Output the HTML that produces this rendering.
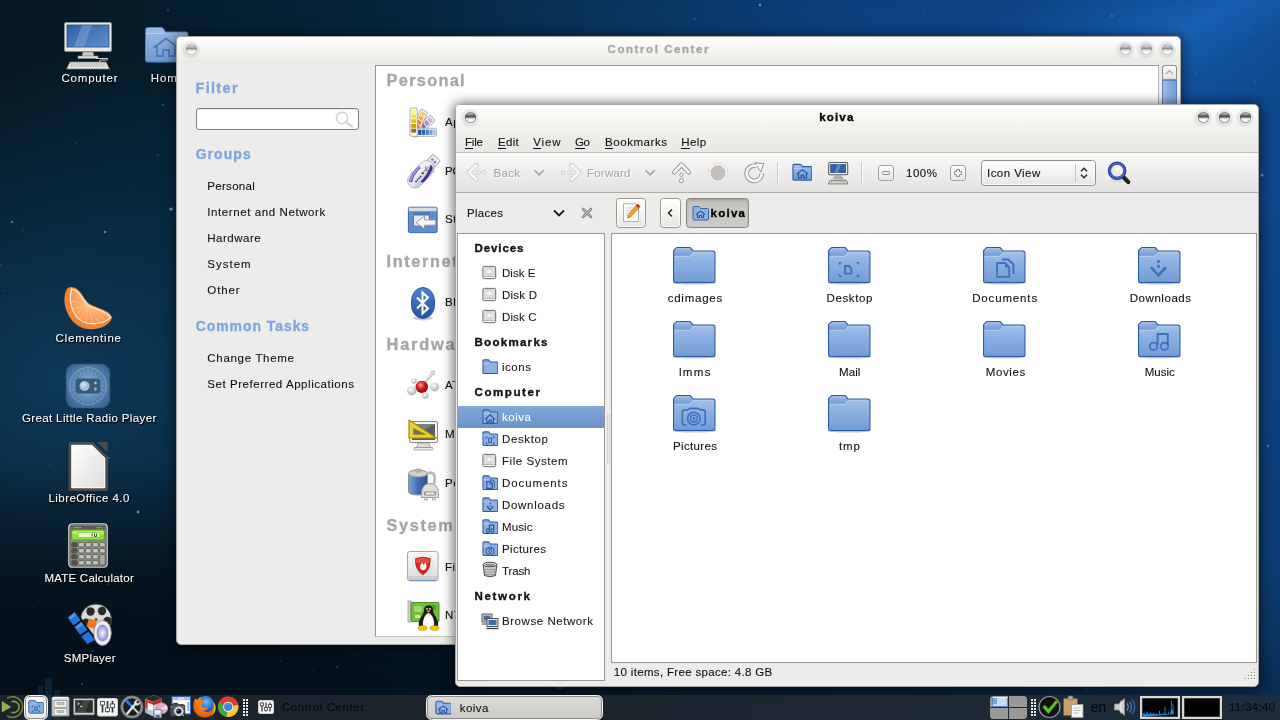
<!DOCTYPE html>
<html><head><meta charset="utf-8"><title>desktop</title>
<style>
html,body{margin:0;padding:0;}
body{width:1280px;height:720px;overflow:hidden;position:relative;font-family:"Liberation Sans",sans-serif;background:#06192b;}
#r{position:absolute;left:0;top:0;width:1280px;height:720px;overflow:hidden;will-change:transform;}
#r div,#r span,#r svg{position:absolute;box-sizing:border-box;}
.t{white-space:nowrap;display:block;}

.win{background:#edeceb;border-radius:5px;border:1px solid #a6a6a3;box-shadow:inset 0 0 0 1px #eaece6;}
.tb{border-radius:4px 4px 0 0;background:linear-gradient(#ffffff 0%,#f7f8f5 40%,#e8ebe5 100%);}
.tb2{border-radius:4px 4px 0 0;background:linear-gradient(#ffffff 0%,#f8f9f6 40%,#eef0eb 100%);}
.ds{text-shadow:1px 1px 1px #000,0 0 2px #000;}

.wr{width:18px;height:18px;border-radius:50%;background:radial-gradient(circle,rgba(214,214,212,0.65) 0%,rgba(218,218,216,0.58) 62%,rgba(225,225,223,0.28) 85%,rgba(230,230,228,0) 100%);}
.wb{width:11px;height:11px;border-radius:50%;left:3.5px;top:3.5px;background:linear-gradient(#ececec 0%,#d6d6d6 14%,#adadad 32%,#8e8e8e 43%,#c4c4c4 52%,#efefef 62%,#fcfcfc 75%,#ffffff 100%);box-shadow:inset 0 0 0 0.8px rgba(120,120,120,0.45);}
.wba{background:linear-gradient(#d2d2d2 0%,#bcbcbc 12%,#747474 30%,#4a4a4a 43%,#8e8e8e 51%,#e2e2e2 60%,#fafafa 72%,#ffffff 100%);box-shadow:inset 0 0 0 0.8px rgba(60,60,60,0.55);}

</style></head><body><div id="r">
<div style="left:0px;top:0px;width:1280px;height:720px;background:radial-gradient(ellipse 380px 230px at 1150px 30px, rgba(20,90,172,0.70), rgba(20,90,172,0) 100%),radial-gradient(ellipse 700px 400px at 1080px 100px, rgba(13,76,150,0.85), rgba(13,76,150,0) 100%),radial-gradient(ellipse 460px 520px at 1290px 380px, rgba(12,64,124,0.85), rgba(12,64,124,0) 100%),radial-gradient(ellipse 420px 330px at 60px 380px, rgba(15,62,98,0.85), rgba(15,62,98,0) 100%),linear-gradient(90deg,#04161f 0%,#052031 20%,#072a48 45%,#0a3762 72%,#0b3b6b 100%);"></div>
<div style="left:0px;top:420px;width:1280px;height:300px;background:radial-gradient(ellipse 1000px 300px at 330px 330px, rgba(4,14,22,0.72), rgba(4,14,22,0.48) 60%, rgba(4,14,26,0) 100%);"></div>
<div style="left:0px;top:420px;width:620px;height:300px;background:radial-gradient(ellipse 560px 250px at 60px 300px, rgba(3,10,16,0.62), rgba(3,10,16,0.35) 55%, rgba(3,10,16,0) 100%);"></div>
<div style="left:0px;top:560px;width:1280px;height:160px;background:linear-gradient(rgba(5,18,34,0),rgba(5,18,34,0.42));"></div>
<div style="left:780px;top:0px;width:500px;height:200px;background:linear-gradient(154deg,rgba(5,36,84,0.40) 0%,rgba(5,36,84,0.30) 26%,rgba(20,90,180,0) 41%,rgba(44,128,224,0.30) 51%,rgba(20,90,180,0) 62%,rgba(5,36,84,0.16) 80%,rgba(5,36,84,0.22) 100%);-webkit-mask-image:radial-gradient(ellipse 100% 100% at 100% 0%,#000 55%,transparent 100%);mask-image:radial-gradient(ellipse 100% 100% at 100% 0%,#000 55%,transparent 100%);"></div>
<svg style="left:0px;top:0px;" width="1280" height="720" viewBox="0 0 1280 720"><circle cx="171" cy="209" r="1.6" fill="#7fb0ee" opacity="0.9"/><circle cx="688" cy="224" r="1.2" fill="#7fb0ee" opacity="0.6"/><circle cx="105" cy="232" r="1.2" fill="#7fb0ee" opacity="0.7"/><circle cx="1262" cy="175" r="1.6" fill="#7fb0ee" opacity="0.8"/><circle cx="760" cy="5" r="1.2" fill="#7fb0ee" opacity="0.8"/><circle cx="270" cy="455" r="1.2" fill="#7fb0ee" opacity="0.6"/><circle cx="138" cy="512" r="1.4" fill="#7fb0ee" opacity="0.8"/><circle cx="12" cy="222" r="1.2" fill="#7fb0ee" opacity="0.6"/><circle cx="560" cy="688" r="1.0" fill="#7fb0ee" opacity="0.5"/><circle cx="1268" cy="446" r="1.2" fill="#7fb0ee" opacity="0.6"/><circle cx="1112" cy="16" r="1" fill="#7fb0ee" opacity="0.5"/><circle cx="74" cy="352" r="0.52" fill="#8fb8e8" opacity="0.26"/><circle cx="89" cy="63" r="0.69" fill="#8fb8e8" opacity="0.39"/><circle cx="158" cy="155" r="0.78" fill="#8fb8e8" opacity="0.43"/><circle cx="1250" cy="32" r="0.89" fill="#8fb8e8" opacity="0.22"/><circle cx="76" cy="143" r="0.81" fill="#8fb8e8" opacity="0.26"/><circle cx="1255" cy="82" r="0.69" fill="#8fb8e8" opacity="0.37"/><circle cx="50" cy="464" r="0.84" fill="#8fb8e8" opacity="0.31"/><circle cx="78" cy="487" r="0.79" fill="#8fb8e8" opacity="0.45"/><circle cx="29" cy="320" r="0.58" fill="#8fb8e8" opacity="0.16"/><circle cx="75" cy="533" r="0.56" fill="#8fb8e8" opacity="0.20"/><circle cx="103" cy="312" r="0.75" fill="#8fb8e8" opacity="0.41"/><circle cx="5" cy="291" r="0.67" fill="#8fb8e8" opacity="0.31"/><circle cx="133" cy="440" r="0.53" fill="#8fb8e8" opacity="0.14"/><circle cx="0" cy="105" r="0.55" fill="#8fb8e8" opacity="0.24"/><circle cx="33" cy="607" r="0.78" fill="#8fb8e8" opacity="0.17"/><circle cx="1087" cy="689" r="0.71" fill="#8fb8e8" opacity="0.28"/><circle cx="110" cy="71" r="0.65" fill="#8fb8e8" opacity="0.21"/><circle cx="30" cy="660" r="0.74" fill="#8fb8e8" opacity="0.17"/><circle cx="695" cy="19" r="0.74" fill="#8fb8e8" opacity="0.44"/><circle cx="455" cy="20" r="0.51" fill="#8fb8e8" opacity="0.21"/><circle cx="109" cy="458" r="0.91" fill="#8fb8e8" opacity="0.38"/><circle cx="163" cy="105" r="0.91" fill="#8fb8e8" opacity="0.39"/><circle cx="168" cy="10" r="0.94" fill="#8fb8e8" opacity="0.33"/><circle cx="168" cy="632" r="0.66" fill="#8fb8e8" opacity="0.27"/><circle cx="670" cy="13" r="0.70" fill="#8fb8e8" opacity="0.18"/><circle cx="5" cy="555" r="0.58" fill="#8fb8e8" opacity="0.28"/><circle cx="136" cy="389" r="0.61" fill="#8fb8e8" opacity="0.21"/><circle cx="156" cy="307" r="0.53" fill="#8fb8e8" opacity="0.20"/><circle cx="94" cy="465" r="0.85" fill="#8fb8e8" opacity="0.42"/><circle cx="281" cy="661" r="0.68" fill="#8fb8e8" opacity="0.28"/><circle cx="1267" cy="578" r="0.57" fill="#8fb8e8" opacity="0.26"/><circle cx="924" cy="14" r="0.75" fill="#8fb8e8" opacity="0.27"/><circle cx="23" cy="230" r="0.78" fill="#8fb8e8" opacity="0.29"/><circle cx="82" cy="684" r="0.85" fill="#8fb8e8" opacity="0.44"/><circle cx="134" cy="184" r="0.52" fill="#8fb8e8" opacity="0.38"/><circle cx="115" cy="40" r="0.81" fill="#8fb8e8" opacity="0.26"/><circle cx="93" cy="651" r="0.79" fill="#8fb8e8" opacity="0.38"/><circle cx="107" cy="594" r="0.53" fill="#8fb8e8" opacity="0.40"/><circle cx="140" cy="112" r="0.52" fill="#8fb8e8" opacity="0.19"/><circle cx="444" cy="13" r="0.61" fill="#8fb8e8" opacity="0.13"/><circle cx="1196" cy="74" r="0.87" fill="#8fb8e8" opacity="0.26"/><circle cx="70" cy="90" r="0.53" fill="#8fb8e8" opacity="0.36"/><circle cx="108" cy="584" r="0.89" fill="#8fb8e8" opacity="0.34"/><circle cx="337" cy="667" r="0.94" fill="#8fb8e8" opacity="0.30"/><circle cx="313" cy="670" r="0.64" fill="#8fb8e8" opacity="0.24"/><circle cx="1" cy="265" r="0.71" fill="#8fb8e8" opacity="0.29"/><circle cx="6" cy="183" r="0.54" fill="#8fb8e8" opacity="0.25"/><circle cx="53" cy="16" r="0.64" fill="#8fb8e8" opacity="0.20"/></svg>
<svg style="left:62px;top:20px;" width="52" height="50" viewBox="0 0 52 50">
<defs><linearGradient id="scr" x1="0" y1="0" x2="1" y2="1"><stop offset="0" stop-color="#2f5fa8"/><stop offset="1" stop-color="#5d8fd0"/></linearGradient></defs>
<rect x="2.5" y="2.500" width="47" height="29" rx="1.500" fill="#e9e9e6" stroke="#8a8c88"/>
<rect x="5" y="5" width="42" height="22" fill="url(#scr)" stroke="#274b80" stroke-width="0.800"/>
<path d="M20 5 L30 5 L22 27 L12 27Z" fill="#fff" opacity="0.18"/>
<path d="M21 32 h10 l1 4 h-12z" fill="#c9cac6" stroke="#8a8c88" stroke-width="0.600"/>
<rect x="16" y="36" width="20" height="2.500" fill="#dfe0dc" stroke="#8a8c88" stroke-width="0.600"/>
<path d="M8 42 h36 l3.500 7 h-43z" fill="#e9eae6" stroke="#77797a" stroke-width="0.800"/>
<path d="M9 44 h34 M8 46 h36" stroke="#8a8c88" stroke-width="1.200" stroke-dasharray="1.500 1"/>
<path d="M34 38.500 h11 q2 0 0 1.500 h-6 q-1.500 0 -1.500 2" stroke="#c9c9c6" fill="none" stroke-width="1"/>
</svg>
<span class="t" style="left:61.50px;top:72.85px;font-size:11.52px;line-height:11.52px;color:#fff;-webkit-text-stroke:0.1px #fff;letter-spacing:0.775px;text-shadow:1px 1px 0 #000,0 1px 2px #000;">Computer</span>
<svg style="left:144px;top:26px;" width="46" height="38" viewBox="0 0 46 38">
<defs><linearGradient id="fh" x1="0" y1="0" x2="0" y2="1"><stop offset="0" stop-color="#9fbde7"/><stop offset="1" stop-color="#6f98cf"/></linearGradient></defs>
<path d="M1.500 4 q0 -2.500 2.500 -2.500 h13 q2 0 3 2 l1.500 2.500 h20.500 q2 0 2 2 v26 q0 2 -2 2 h-38.500 q-2 0 -2 -2z" fill="url(#fh)" stroke="#5583c4"/>
<path d="M2.500 7.500 h15 q1.500 0 2.500 -1.500" fill="none" stroke="#bcd2f0" stroke-width="1"/>
<path d="M9.500 22 l12.500 -9.500 l12.500 9.500 M13 20 v10 h6 v-6 h6 v6 h6 v-10" fill="none" stroke="#4a7cc2" stroke-width="1.800"/>
</svg>
<span class="t" style="left:150.65px;top:72.85px;font-size:11.52px;line-height:11.52px;color:#fff;-webkit-text-stroke:0.1px #fff;letter-spacing:0.924px;text-shadow:1px 1px 0 #000,0 1px 2px #000;">Home</span>
<svg style="left:62px;top:284px;" width="52" height="48" viewBox="0 0 52 48">
<defs><radialGradient id="cl" cx="0.520" cy="0.420" r="0.650"><stop offset="0" stop-color="#fdbb85"/><stop offset="1" stop-color="#f59348"/></radialGradient></defs>
<path d="M9 3 C19 3.500 21 15 27 19.500 C35 24.500 48 26 50 33.500 C48 42 34 47.500 22 44.500 C8 40.500 0 22 3 10 C4 5.500 6 3 9 3Z" fill="#f08535"/>
<path d="M9.500 5 C18 6 20 16 26.500 21 C34 26 46 27.500 48.500 33.500 C42 40 29 41.500 20.500 37.500 C11 32.500 6 19 9.500 5Z" fill="url(#cl)" stroke="#fee4d0" stroke-width="1.300"/>
<g stroke="#fdd0a8" stroke-width="0.700" opacity="0.750"><path d="M26 21 L10 9"/><path d="M26 21 L8.500 17"/><path d="M26 21 L10 25"/><path d="M26 21 L13 31"/><path d="M26 21 L18 36"/><path d="M26 21 L24 39"/><path d="M26 21 L31 40"/><path d="M26 21 L37 39"/><path d="M26 21 L43 36"/><path d="M26 21 L47 33"/><path d="M26 21 L12 6"/></g>
</svg>
<span class="t" style="left:55.60px;top:332.85px;font-size:11.52px;line-height:11.52px;color:#fff;-webkit-text-stroke:0.1px #fff;letter-spacing:0.793px;text-shadow:1px 1px 0 #000,0 1px 2px #000;">Clementine</span>
<svg style="left:65px;top:363px;" width="46" height="46" viewBox="0 0 46 46">
<defs><radialGradient id="rp" cx="0.500" cy="0.480" r="0.620"><stop offset="0" stop-color="#8db4dc"/><stop offset="0.550" stop-color="#5f8cbc"/><stop offset="1" stop-color="#3b6490"/></radialGradient></defs>
<rect x="1" y="1" width="44" height="44" rx="8.500" fill="url(#rp)" stroke="#2d4e73" stroke-width="0.800" opacity="0.930"/>
<circle cx="23" cy="23" r="18.500" fill="none" stroke="#a9c8e8" stroke-width="0.700" opacity="0.600"/>
<g stroke="#b9d4ef" stroke-width="0.500" opacity="0.450"><path d="M23 23 L41.5 23.0"/><path d="M23 23 L40.9 27.8"/><path d="M23 23 L39.0 32.3"/><path d="M23 23 L36.1 36.1"/><path d="M23 23 L32.2 39.0"/><path d="M23 23 L27.8 40.9"/><path d="M23 23 L23.0 41.5"/><path d="M23 23 L18.2 40.9"/><path d="M23 23 L13.7 39.0"/><path d="M23 23 L9.9 36.1"/><path d="M23 23 L7.0 32.2"/><path d="M23 23 L5.1 27.8"/><path d="M23 23 L4.5 23.0"/><path d="M23 23 L5.1 18.2"/><path d="M23 23 L7.0 13.7"/><path d="M23 23 L9.9 9.9"/><path d="M23 23 L13.8 7.0"/><path d="M23 23 L18.2 5.1"/><path d="M23 23 L23.0 4.5"/><path d="M23 23 L27.8 5.1"/><path d="M23 23 L32.3 7.0"/><path d="M23 23 L36.1 9.9"/><path d="M23 23 L39.0 13.8"/><path d="M23 23 L40.9 18.2"/></g>
<rect x="10.500" y="15.500" width="25" height="15" rx="3.500" fill="#3a5877"/>
<circle cx="19.500" cy="23" r="5" fill="#a9c0d8"/><circle cx="18.500" cy="22" r="2.500" fill="#c4d6e8"/>
<circle cx="30.500" cy="20" r="1.400" fill="#a9c0d8"/><circle cx="30.500" cy="26" r="1.400" fill="#a9c0d8"/>
</svg>
<span class="t" style="left:21.90px;top:412.85px;font-size:11.52px;line-height:11.52px;color:#fff;-webkit-text-stroke:0.1px #fff;letter-spacing:0.371px;text-shadow:1px 1px 0 #000,0 1px 2px #000;">Great Little Radio Player</span>
<svg style="left:67px;top:441px;" width="42" height="50" viewBox="0 0 42 50">
<defs><linearGradient id="lo" x1="0" y1="0" x2="1" y2="1"><stop offset="0" stop-color="#ffffff"/><stop offset="1" stop-color="#dcdcda"/></linearGradient></defs>
<path d="M3 2.500 h22.500 l14 14 v32 h-36.500z" fill="url(#lo)" stroke="#4c4c4c" stroke-width="3" stroke-linejoin="round"/>
<path d="M30 1 h10.500 v10.500z" fill="#4c4c4c"/>
<path d="M4.800 4.300 h20 l13 13 v29.500 h-33z" fill="none" stroke="#fff" stroke-width="1" opacity="0.900"/>
</svg>
<span class="t" style="left:48.45px;top:492.85px;font-size:11.52px;line-height:11.52px;color:#fff;-webkit-text-stroke:0.1px #fff;letter-spacing:0.442px;text-shadow:1px 1px 0 #000,0 1px 2px #000;">LibreOffice 4.0</span>
<svg style="left:68px;top:523px;" width="40" height="45" viewBox="0 0 40 45">
<rect x="0.750" y="0.750" width="38.500" height="43.500" rx="3.500" fill="#8e9089" stroke="#c9cac5" stroke-width="1.200"/>
<rect x="2" y="2" width="36" height="41" rx="2.500" fill="none" stroke="#5a5c55" stroke-width="0.800"/>
<rect x="3" y="3" width="34" height="3.500" fill="#5a5c55"/><path d="M5.500 4.700 h8" stroke="#c9cac5" stroke-width="1" stroke-dasharray="1 0.600"/><path d="M28 4.700 h7" stroke="#c98a3a" stroke-width="1"/>
<rect x="3.600" y="7" width="32.800" height="10" rx="1.500" fill="#8ae234" stroke="#4e9a06" stroke-width="0.800"/><rect x="4.500" y="7.800" width="31" height="3.500" rx="1" fill="#c4f58a" opacity="0.700"/>
<rect x="10" y="9.500" width="22" height="5" fill="#e4f8c8" stroke="#6ab02a" stroke-width="0.500"/><path d="M24 10.500 v3 M26.500 10.500 v3 h2 v-3" stroke="#2a4a0a" stroke-width="0.900" fill="none"/>
<rect x="3.6" y="19.5" width="5.600" height="4.400" rx="1" fill="#4f514b" stroke="#4a4c46" stroke-width="0.700"/><rect x="10.6" y="19.5" width="5.600" height="4.400" rx="1" fill="#c4c5c0" stroke="#4a4c46" stroke-width="0.700"/><rect x="17.6" y="19.5" width="5.600" height="4.400" rx="1" fill="#c4c5c0" stroke="#4a4c46" stroke-width="0.700"/><rect x="24.6" y="19.5" width="5.600" height="4.400" rx="1" fill="#c4c5c0" stroke="#4a4c46" stroke-width="0.700"/><rect x="31.6" y="19.5" width="5.600" height="4.400" rx="1" fill="#c4c5c0" stroke="#4a4c46" stroke-width="0.700"/><rect x="3.6" y="25.5" width="5.600" height="4.400" rx="1" fill="#4f514b" stroke="#4a4c46" stroke-width="0.700"/><rect x="10.6" y="25.5" width="5.600" height="4.400" rx="1" fill="#c4c5c0" stroke="#4a4c46" stroke-width="0.700"/><rect x="17.6" y="25.5" width="5.600" height="4.400" rx="1" fill="#c4c5c0" stroke="#4a4c46" stroke-width="0.700"/><rect x="24.6" y="25.5" width="5.600" height="4.400" rx="1" fill="#c4c5c0" stroke="#4a4c46" stroke-width="0.700"/><rect x="31.6" y="25.5" width="5.600" height="4.400" rx="1" fill="#c4c5c0" stroke="#4a4c46" stroke-width="0.700"/><rect x="3.6" y="31.5" width="5.600" height="4.400" rx="1" fill="#4f514b" stroke="#4a4c46" stroke-width="0.700"/><rect x="10.6" y="31.5" width="5.600" height="4.400" rx="1" fill="#c4c5c0" stroke="#4a4c46" stroke-width="0.700"/><rect x="17.6" y="31.5" width="5.600" height="4.400" rx="1" fill="#c4c5c0" stroke="#4a4c46" stroke-width="0.700"/><rect x="24.6" y="31.5" width="5.600" height="4.400" rx="1" fill="#c4c5c0" stroke="#4a4c46" stroke-width="0.700"/><rect x="31.6" y="31.5" width="5.600" height="10.500" rx="1" fill="#a9aaa5" stroke="#4a4c46" stroke-width="0.700"/><rect x="3.6" y="37.5" width="5.600" height="4.400" rx="1" fill="#4f514b" stroke="#4a4c46" stroke-width="0.700"/><rect x="10.6" y="37.5" width="5.600" height="4.400" rx="1" fill="#c4c5c0" stroke="#4a4c46" stroke-width="0.700"/><rect x="17.6" y="37.5" width="5.600" height="4.400" rx="1" fill="#c4c5c0" stroke="#4a4c46" stroke-width="0.700"/><rect x="24.6" y="37.5" width="5.600" height="4.400" rx="1" fill="#c4c5c0" stroke="#4a4c46" stroke-width="0.700"/>
</svg>
<span class="t" style="left:44.40px;top:572.85px;font-size:11.52px;line-height:11.52px;color:#fff;-webkit-text-stroke:0.1px #fff;letter-spacing:0.228px;text-shadow:1px 1px 0 #000,0 1px 2px #000;">MATE Calculator</span>
<svg style="left:64px;top:602px;" width="50" height="48" viewBox="0 0 50 48">
<defs><radialGradient id="spk" cx="0.500" cy="0.500" r="0.500"><stop offset="0" stop-color="#fff"/><stop offset="0.300" stop-color="#c9c6f4"/><stop offset="0.620" stop-color="#8f8ad8"/><stop offset="0.700" stop-color="#e8e8ee"/><stop offset="1" stop-color="#f4f4f6"/></radialGradient></defs>
<circle cx="32" cy="17.500" r="15.500" fill="#dadad8" stroke="#4a4a4a" stroke-width="1"/>
<circle cx="26.500" cy="9.500" r="4.200" fill="#2a2a2a"/><circle cx="38" cy="9" r="4.200" fill="#2a2a2a"/><circle cx="43.500" cy="19" r="4.200" fill="#2a2a2a"/><circle cx="22" cy="20" r="3.600" fill="#2a2a2a"/><circle cx="32" cy="17.500" r="1.500" fill="#555"/>
<path d="M1.500 15.200 L11.200 7.400 L33.600 38.500 L22.900 44.400Z" fill="#111"/>
<path d="M3.800 15.600 L10.700 10 L16.500 18.200 L9.300 23.400Z M10.500 25 L17.600 19.800 L23.500 28 L16 32.800Z M17.200 34.400 L24.600 29.600 L30.800 38 L23.400 42Z" fill="#1f74e0"/>
<path d="M4.500 15.700 L10.500 10.800 L12 13 L6 17.800Z M11.200 25 L17.400 20.600 L19 22.800 L12.800 27.200Z" fill="#6aa8f4" opacity="0.700"/>
<path d="M25 16.500 l8 2.500 l-2.500 8 l-8 -2.500z" fill="#f57a16"/>
<ellipse cx="38.500" cy="31" rx="8.800" ry="12.500" fill="url(#spk)" stroke="#8a8a8a" stroke-width="0.900"/>
</svg>
<span class="t" style="left:63.75px;top:652.85px;font-size:11.52px;line-height:11.52px;color:#fff;-webkit-text-stroke:0.1px #fff;letter-spacing:0.281px;text-shadow:1px 1px 0 #000,0 1px 2px #000;">SMPlayer</span>
<div style="left:176px;top:36px;width:1005px;height:609px;border-radius:5px;box-shadow:0 1px 12px 2px rgba(0,0,0,0.50);"></div>
<div class="win" style="left:176px;top:36px;width:1005px;height:609px;"></div>
<div class="tb" style="left:177px;top:37px;width:1003px;height:25px;"></div>
<div class="wr" style="left:182px;top:40.5px;"><div class="wb"></div></div>
<div class="wr" style="left:1116px;top:40.5px;"><div class="wb"></div></div>
<div class="wr" style="left:1137px;top:40.5px;"><div class="wb"></div></div>
<div class="wr" style="left:1158px;top:40.5px;"><div class="wb"></div></div>
<span class="t" style="left:607.50px;top:43.85px;font-size:11.52px;line-height:11.52px;color:#aaa8a5;font-weight:bold;-webkit-text-stroke:0.35px #aaa8a5;letter-spacing:1.566px;">Control Center</span>
<span class="t" style="left:195.50px;top:81.41px;font-size:14.4px;line-height:14.4px;color:#7ea6de;font-weight:bold;-webkit-text-stroke:0.35px #7ea6de;letter-spacing:1.359px;">Filter</span>
<div style="left:196px;top:108px;width:163px;height:22px;background:#fff;border:1px solid #7f7e7b;border-radius:3px;box-shadow:inset 0 1px 1px rgba(0,0,0,0.10);"></div>
<svg style="left:332px;top:110px;" width="24" height="18" viewBox="0 0 24 18"><circle cx="10" cy="8" r="5.6" fill="none" stroke="#d4d3d1" stroke-width="1.6"/><path d="M14 12 l6 4.500" stroke="#d4d3d1" stroke-width="2.200" stroke-linecap="round"/></svg>
<span class="t" style="left:195.70px;top:147.82px;font-size:13.92px;line-height:13.92px;color:#7ea6de;font-weight:bold;-webkit-text-stroke:0.35px #7ea6de;letter-spacing:1.102px;">Groups</span>
<span class="t" style="left:207.30px;top:180.85px;font-size:11.52px;line-height:11.52px;color:#111;-webkit-text-stroke:0.1px #111;letter-spacing:0.291px;">Personal</span>
<span class="t" style="left:207.30px;top:206.85px;font-size:11.52px;line-height:11.52px;color:#111;-webkit-text-stroke:0.1px #111;letter-spacing:0.583px;">Internet and Network</span>
<span class="t" style="left:207.30px;top:232.85px;font-size:11.52px;line-height:11.52px;color:#111;-webkit-text-stroke:0.1px #111;letter-spacing:0.495px;">Hardware</span>
<span class="t" style="left:207.30px;top:258.85px;font-size:11.52px;line-height:11.52px;color:#111;-webkit-text-stroke:0.1px #111;letter-spacing:0.999px;">System</span>
<span class="t" style="left:207.30px;top:284.85px;font-size:11.52px;line-height:11.52px;color:#111;-webkit-text-stroke:0.1px #111;letter-spacing:0.898px;">Other</span>
<span class="t" style="left:195.70px;top:319.82px;font-size:13.92px;line-height:13.92px;color:#7ea6de;font-weight:bold;-webkit-text-stroke:0.35px #7ea6de;letter-spacing:0.990px;">Common Tasks</span>
<span class="t" style="left:207.30px;top:352.85px;font-size:11.52px;line-height:11.52px;color:#111;-webkit-text-stroke:0.1px #111;letter-spacing:0.682px;">Change Theme</span>
<span class="t" style="left:207.30px;top:378.85px;font-size:11.52px;line-height:11.52px;color:#111;-webkit-text-stroke:0.1px #111;letter-spacing:0.541px;">Set Preferred Applications</span>
<div style="left:375px;top:65px;width:784px;height:572px;background:#fff;border:1px solid #96948f;border-right-color:#b5b3af;border-bottom-color:#c5c3bf;"></div>
<div style="left:1162px;top:65px;width:15px;height:572px;background:#d9d7d4;border:1px solid #a7a5a1;border-radius:3px;"></div>
<div style="left:1162px;top:65px;width:15px;height:15px;background:linear-gradient(#fbfbfa,#e6e5e3);border:1px solid #8f8d89;border-radius:3px 3px 0 0;"></div>
<svg style="left:1162px;top:65px;" width="15" height="15" viewBox="0 0 15 15"><path d="M4.200 8.800 l3.300 -3.300 l3.300 3.300" fill="none" stroke="#a09e9b" stroke-width="1.200"/></svg>
<div style="left:1162px;top:80px;width:15px;height:60px;background:linear-gradient(90deg,#9dbbe6,#86a9dc 60%,#7b9fd4);border:1px solid #5c83bd;"></div>
<span class="t" style="left:386.60px;top:72.19px;font-size:16.32px;line-height:16.32px;color:#a9a5a2;font-weight:bold;-webkit-text-stroke:0.35px #a9a5a2;letter-spacing:1.295px;">Personal</span>
<span class="t" style="left:386.60px;top:253.19px;font-size:16.32px;line-height:16.32px;color:#a9a5a2;font-weight:bold;-webkit-text-stroke:0.35px #a9a5a2;letter-spacing:1.616px;">Internet and Network</span>
<span class="t" style="left:386.60px;top:336.19px;font-size:16.32px;line-height:16.32px;color:#a9a5a2;font-weight:bold;-webkit-text-stroke:0.35px #a9a5a2;letter-spacing:1.817px;">Hardware</span>
<span class="t" style="left:386.60px;top:517.19px;font-size:16.32px;line-height:16.32px;color:#a9a5a2;font-weight:bold;-webkit-text-stroke:0.35px #a9a5a2;letter-spacing:1.608px;">System</span>
<span class="t" style="left:445.00px;top:116.85px;font-size:11.52px;line-height:11.52px;color:#111;-webkit-text-stroke:0.1px #111;letter-spacing:0.553px;">Appearance</span>
<span class="t" style="left:445.00px;top:165.85px;font-size:11.52px;line-height:11.52px;color:#111;-webkit-text-stroke:0.1px #111;letter-spacing:-0.141px;">PCManFM</span>
<span class="t" style="left:445.00px;top:213.85px;font-size:11.52px;line-height:11.52px;color:#111;-webkit-text-stroke:0.1px #111;letter-spacing:0.604px;">Startup Applications</span>
<span class="t" style="left:445.00px;top:296.85px;font-size:11.52px;line-height:11.52px;color:#111;-webkit-text-stroke:0.1px #111;letter-spacing:0.691px;">Bluetooth</span>
<span class="t" style="left:445.00px;top:379.85px;font-size:11.52px;line-height:11.52px;color:#111;-webkit-text-stroke:0.1px #111;letter-spacing:0.393px;">ATI Catalyst</span>
<span class="t" style="left:445.00px;top:428.85px;font-size:11.52px;line-height:11.52px;color:#111;-webkit-text-stroke:0.1px #111;letter-spacing:0.590px;">Monitors</span>
<span class="t" style="left:445.00px;top:477.85px;font-size:11.52px;line-height:11.52px;color:#111;-webkit-text-stroke:0.1px #111;letter-spacing:0.521px;">Power Management</span>
<span class="t" style="left:445.00px;top:561.85px;font-size:11.52px;line-height:11.52px;color:#111;-webkit-text-stroke:0.1px #111;letter-spacing:0.345px;">Firewall</span>
<span class="t" style="left:445.00px;top:609.85px;font-size:11.52px;line-height:11.52px;color:#111;-webkit-text-stroke:0.1px #111;letter-spacing:0.353px;">NTFS Configuration</span>
<svg style="left:406.1px;top:105px;" width="31.4" height="34.2" viewBox="0 0 36 36" preserveAspectRatio="none">
<g transform="rotate(52 9 31)"><rect x="4.500" y="3" width="8.500" height="29" rx="1.500" fill="#f4f4f2" stroke="#9a9a96" stroke-width="0.800"/>
<rect x="6" y="5" width="5.500" height="4" fill="#c9b3d8"/><rect x="6" y="10" width="5.500" height="4" fill="#ad8cc4"/><rect x="6" y="15" width="5.500" height="4" fill="#8f69ad"/><rect x="6" y="20" width="5.500" height="4" fill="#6e4a8e"/></g>
<g transform="rotate(26 9 31)"><rect x="4.500" y="3" width="8.500" height="29" rx="1.500" fill="#f4f4f2" stroke="#9a9a96" stroke-width="0.800"/>
<rect x="6" y="5" width="5.500" height="4" fill="#ffc27a"/><rect x="6" y="10" width="5.500" height="4" fill="#fca94a"/><rect x="6" y="15" width="5.500" height="4" fill="#f58a1a"/><rect x="6" y="20" width="5.500" height="4" fill="#d96a08"/></g>
<rect x="6" y="24.500" width="29" height="8.500" rx="1.500" fill="#f4f4f2" stroke="#9a9a96" stroke-width="0.800"/>
<rect x="14" y="26" width="3.600" height="5.500" fill="#1f4b8f"/><rect x="18.300" y="26" width="3.600" height="5.500" fill="#2f62ad"/><rect x="22.600" y="26" width="3.600" height="5.500" fill="#4a7fc6"/><rect x="26.900" y="26" width="3.600" height="5.500" fill="#74a0da"/><rect x="31.200" y="26" width="2.800" height="5.500" fill="#9fc0ea"/>
<rect x="4.500" y="3" width="8.500" height="30" rx="1.500" fill="#f4f4f2" stroke="#9a9a96" stroke-width="0.800"/>
<rect x="6" y="5" width="5.500" height="4" fill="#fff27a"/><rect x="6" y="10" width="5.500" height="4" fill="#f5e23a"/><rect x="6" y="15" width="5.500" height="4" fill="#e3c700"/><rect x="6" y="20" width="5.500" height="4" fill="#c4a000"/><rect x="6" y="25" width="5.500" height="4" fill="#8f7400"/>
</svg>
<svg style="left:403px;top:150px;" width="42" height="42" viewBox="0 0 42 42">
<defs><linearGradient id="usb" x1="0" y1="0" x2="0" y2="1"><stop offset="0" stop-color="#fbfbfd"/><stop offset="0.600" stop-color="#e4e4ec"/><stop offset="1" stop-color="#bdbdcc"/></linearGradient></defs>
<g transform="rotate(-47 21 21)">
<rect x="30" y="16" width="9.500" height="10" rx="1" fill="#e9e9ee" stroke="#8f8f9c" stroke-width="0.800"/>
<rect x="34" y="18.300" width="2" height="2" fill="#5a78b0"/><rect x="34" y="21.800" width="2" height="2" fill="#5a78b0"/>
<rect x="0.500" y="13.500" width="32" height="15" rx="7.500" fill="url(#usb)" stroke="#a8a8b8" stroke-width="0.800"/>
<path d="M3.500 16.500 q8 -4 18 -2.600 l-0.500 2.800 q-9 -0.800 -16.500 3.300 q-1.800 -1.500 -1 -3.500z" fill="#7a5cc0"/><path d="M4 17 q8 -3.500 17 -2.600 l-0.200 1 q-9 -0.500 -16.500 2.800z" fill="#b9a4e8"/>
<path d="M12 28.300 q9 0.800 17 -2.800 q1.500 -2 1 -4 q-8 4.500 -19.500 4.300z" fill="#4a2d92"/>
<path d="M7 22.300 h9" stroke="#2a5a9c" stroke-width="1.700" stroke-dasharray="1.600 0.700"/><circle cx="18.500" cy="21.500" r="1.100" fill="#333"/>
<path d="M20 21.500 h7 M23 21.500 l2 -2 h1.500 M22 21.500 l2 2 h1.500" fill="none" stroke="#555" stroke-width="0.700"/>
</g></svg>
<svg style="left:407.3px;top:204.6px;" width="31.5" height="29.8" viewBox="0 0 34 34" preserveAspectRatio="none">
<rect x="1.500" y="2.500" width="31" height="29" rx="1.500" fill="#5f8fd0" stroke="#2f5c9e"/>
<rect x="2" y="3" width="30" height="4" fill="#d6dde8"/>
<rect x="7" y="9" width="17" height="15" fill="#e9edf3" stroke="#3d66a0" stroke-width="0.800"/>
<rect x="7" y="9" width="17" height="3" fill="#4a78b8"/>
<path d="M31 17 h-12 v-4.500 l-9 7.500 l9 7.500 v-4.500 h12z" fill="#fafafa" stroke="#888" stroke-width="0.900"/>
</svg>
<svg style="left:409px;top:285.5px;" width="28" height="38" viewBox="0 0 28 38">
<defs><linearGradient id="bt" x1="0" y1="0" x2="0" y2="1"><stop offset="0" stop-color="#4f86cc"/><stop offset="1" stop-color="#1f539c"/></linearGradient></defs>
<ellipse cx="14" cy="32.300" rx="10" ry="2.200" fill="#000" opacity="0.200"/>
<rect x="2.500" y="1.500" width="23" height="31" rx="11.500" ry="13.500" fill="url(#bt)" stroke="#2a5c9f" stroke-width="1"/>
<path d="M8 11.500 l11 11 l-5.500 5 v-21 l5.500 5 l-11 11" fill="none" stroke="#fff" stroke-width="2" stroke-linejoin="miter"/>
</svg>
<svg style="left:404px;top:368px;" width="38" height="36" viewBox="0 0 38 36">
<defs><radialGradient id="rb" cx="0.400" cy="0.350" r="0.700"><stop offset="0" stop-color="#ff9a9a"/><stop offset="0.450" stop-color="#d81a1a"/><stop offset="1" stop-color="#8a0808"/></radialGradient>
<radialGradient id="wbl" cx="0.400" cy="0.350" r="0.700"><stop offset="0" stop-color="#fff"/><stop offset="1" stop-color="#a9a9a9"/></radialGradient></defs>
<path d="M20 16 L28.500 5.500" stroke="#d4d4d4" stroke-width="3" stroke-linecap="round"/><path d="M26.500 4 l4 -1 l-0.500 4.500" fill="none" stroke="#bdbdbd" stroke-width="1"/>
<circle cx="10" cy="13" r="2.700" fill="url(#wbl)"/>
<circle cx="7.700" cy="22.800" r="4.600" fill="url(#wbl)"/><circle cx="30.600" cy="18.900" r="4.500" fill="url(#wbl)"/>
<circle cx="17.800" cy="18.900" r="6.200" fill="url(#rb)"/>
<circle cx="21.300" cy="27.600" r="3.300" fill="url(#wbl)"/>
</svg>
<svg style="left:406px;top:417px;" width="34" height="36" viewBox="0 0 34 36">
<rect x="3.500" y="4.500" width="28" height="21" rx="1.500" fill="#f4f4f2" stroke="#8a8c88"/>
<rect x="6" y="7" width="23" height="16" fill="#5a5f62"/><path d="M6 7 h23 l-23 12z" fill="#7a8084"/>
<path d="M12 26 h11 l1.500 4.500 h-14z" fill="#dcdcd8" stroke="#8a8c88" stroke-width="0.700"/>
<rect x="8" y="30.500" width="19" height="2.500" rx="1" fill="#ecece8" stroke="#8a8c88" stroke-width="0.700"/>
<path d="M3 3 L30.500 21 L3 21Z" fill="#e9cf3a" stroke="#a88a00" stroke-width="1.200" stroke-linejoin="round"/>
<path d="M7.500 11.500 L20 17.500 L7.500 17.500Z" fill="#6a6f72" stroke="#a88a00" stroke-width="0.800"/>
</svg>
<svg style="left:406px;top:466px;" width="36" height="38" viewBox="0 0 36 38">
<defs><linearGradient id="cy" x1="0" y1="0" x2="1" y2="0"><stop offset="0" stop-color="#7fa4d6"/><stop offset="0.500" stop-color="#3f6fb0"/><stop offset="1" stop-color="#2c558f"/></linearGradient></defs>
<path d="M22 7 q9 -2 6 11" fill="none" stroke="#b9b9b5" stroke-width="2.800"/>
<path d="M2.500 8 v17 q0 4 9.500 4 q9.500 0 9.500 -4 v-17z" fill="url(#cy)" stroke="#8f918c" stroke-width="1"/>
<ellipse cx="12" cy="7.500" rx="9.500" ry="3.600" fill="#cfd0cc" stroke="#8f918c"/>
<rect x="9.500" y="3" width="5" height="3" rx="1" fill="#b9bab6" stroke="#8f918c" stroke-width="0.700"/>
<path d="M15.500 28 q0 -10.500 8.500 -10.500 q8.500 0 8.500 10.500 v3.500 h-17z" fill="#dededb" stroke="#9a9c97" stroke-width="1"/>
<rect x="18" y="25.500" width="12" height="4" rx="1" fill="#8a8c88"/><rect x="19.500" y="26.500" width="9" height="2" fill="#f4f4f2"/><rect x="18.500" y="31.500" width="3" height="2.500" fill="#dededb" stroke="#9a9c97" stroke-width="0.600"/><rect x="26.500" y="31.500" width="3" height="2.500" fill="#dededb" stroke="#9a9c97" stroke-width="0.600"/>
</svg>
<svg style="left:406.3px;top:550px;" width="33.6" height="33.4" viewBox="0 0 34 34" preserveAspectRatio="none">
<defs><linearGradient id="dr" x1="0" y1="0" x2="0" y2="1"><stop offset="0" stop-color="#fbfbfa"/><stop offset="1" stop-color="#d9d9d6"/></linearGradient></defs>
<rect x="1.500" y="1.500" width="31" height="30" rx="2.500" fill="url(#dr)" stroke="#a5a7a2"/>
<path d="M2 27.500 h30" stroke="#b9bbb6"/><rect x="2" y="28" width="30" height="3.500" fill="#c9ccd2"/><path d="M3 31 h28" stroke="#6f92c4"/>
<circle cx="17" cy="14" r="10.500" fill="none" stroke="#e0e0dd" stroke-width="1"/>
<g transform="translate(1.400 3.200) scale(0.92)"><path d="M9 6 q8 -3 16 0 q1 12 -8 18 q-9 -6 -8 -18z" fill="#d8231f" stroke="#a30f0c" stroke-width="0.800"/><path d="M9.500 6.500 q7.500 -2.500 15 0 l-0.300 5 q-7 -2 -14.400 0z" fill="#f0604a" opacity="0.700"/>
<path d="M17 19 q-4 -1 -3 -5 q1 -2 2.500 -4 q0 2 1.500 3 q0.500 -2 2 -3 q2.500 6 -1 8.500 q-1 0.700 -2 0.500z" fill="#fff"/></g>
</svg>
<svg style="left:406px;top:598px;" width="36" height="36" viewBox="0 0 36 36">
<rect x="2" y="3" width="3" height="21" fill="#d9d9d6" stroke="#8a8c88" stroke-width="0.700"/>
<rect x="5" y="4.500" width="28" height="19" rx="1" fill="#6fbf3a" stroke="#3f8a1a" stroke-width="0.900"/>
<rect x="8" y="8" width="8" height="6" fill="#9ad86a"/><rect x="22" y="7" width="8" height="5" fill="#4f9a2a"/><rect x="9" y="17" width="5" height="3" fill="#cfe8b0"/>
<path d="M22.500 7.500 q4.500 0 4.500 5 q0 2.500 2.500 6 q3.500 5 2.500 10 l-19 0 q-1 -5 2.500 -10 q2.500 -3.500 2.500 -6 q0 -5 4.500 -5z" fill="#1a1a1a"/>
<path d="M22.500 15 q3.500 1 5 6.500 q1.500 5 -0.500 8.500 h-9 q-2 -3.500 -0.500 -8.500 q1.500 -5.500 5 -6.500z" fill="#fbfbfb"/>
<path d="M20.500 12.500 h4 l-2 2.300z" fill="#f5b400"/><circle cx="21" cy="10.800" r="0.900" fill="#fff"/><circle cx="24" cy="10.800" r="0.900" fill="#fff"/>
<ellipse cx="16.500" cy="30" rx="4.500" ry="2.500" fill="#f5c400" stroke="#b98a00" stroke-width="0.500"/><ellipse cx="28.500" cy="30" rx="4.500" ry="2.500" fill="#f5c400" stroke="#b98a00" stroke-width="0.500"/>
</svg>
<div style="left:455px;top:104px;width:804px;height:583px;border-radius:5px;box-shadow:0 1px 12px 2px rgba(0,0,0,0.55);"></div>
<div class="win" style="left:455px;top:104px;width:804px;height:583px;"></div>
<div class="tb2" style="left:456px;top:105px;width:802px;height:26px;"></div>
<div class="wr" style="left:461px;top:108.5px;"><div class="wb wba"></div></div>
<div class="wr" style="left:1194px;top:108.5px;"><div class="wb wba"></div></div>
<div class="wr" style="left:1215px;top:108.5px;"><div class="wb wba"></div></div>
<div class="wr" style="left:1236px;top:108.5px;"><div class="wb wba"></div></div>
<span class="t" style="left:819.30px;top:111.85px;font-size:11.52px;line-height:11.52px;color:#000;font-weight:bold;-webkit-text-stroke:0.35px #000;letter-spacing:1.136px;">koiva</span>
<div style="left:456px;top:131px;width:802px;height:21px;background:linear-gradient(#eeefeb,#e9e8e6);"></div>
<span class="t" style="left:465.00px;top:136.85px;font-size:11.52px;line-height:11.52px;color:#111;-webkit-text-stroke:0.1px #111;letter-spacing:-0.187px;">File</span>
<div style="left:465px;top:148px;width:8px;height:1px;background:#111;"></div>
<span class="t" style="left:498.00px;top:136.85px;font-size:11.52px;line-height:11.52px;color:#111;-webkit-text-stroke:0.1px #111;letter-spacing:0.283px;">Edit</span>
<div style="left:498px;top:148px;width:8px;height:1px;background:#111;"></div>
<span class="t" style="left:533.20px;top:136.85px;font-size:11.52px;line-height:11.52px;color:#111;-webkit-text-stroke:0.1px #111;letter-spacing:0.846px;">View</span>
<div style="left:533.2px;top:148px;width:8px;height:1px;background:#111;"></div>
<span class="t" style="left:575.00px;top:136.85px;font-size:11.52px;line-height:11.52px;color:#111;-webkit-text-stroke:0.1px #111;letter-spacing:-0.367px;">Go</span>
<div style="left:575px;top:148px;width:10px;height:1px;background:#111;"></div>
<span class="t" style="left:605.00px;top:136.85px;font-size:11.52px;line-height:11.52px;color:#111;-webkit-text-stroke:0.1px #111;letter-spacing:0.548px;">Bookmarks</span>
<div style="left:605px;top:148px;width:8px;height:1px;background:#111;"></div>
<span class="t" style="left:681.20px;top:136.85px;font-size:11.52px;line-height:11.52px;color:#111;-webkit-text-stroke:0.1px #111;letter-spacing:0.436px;">Help</span>
<div style="left:681.2px;top:148px;width:9px;height:1px;background:#111;"></div>
<div style="left:456px;top:152px;width:802px;height:41px;background:linear-gradient(#f7f7f6 0%,#efeeed 50%,#e3e2e0 100%);border-top:1px solid #c2c0bd;border-bottom:1px solid #aeaca8;"></div>
<svg style="left:465px;top:161px;" width="24" height="24" viewBox="0 0 24 24"><path d="M11.500 4.400 L3.800 11.400 L11.500 18.400" fill="none" stroke="#cbc9c6" stroke-width="4.600" stroke-linecap="round" stroke-linejoin="round"/><path d="M11.500 4.400 L3.800 11.400 L11.500 18.400" fill="none" stroke="#f7f7f6" stroke-width="2.800" stroke-linecap="round" stroke-linejoin="round"/>
<circle cx="13.600" cy="11.500" r="1.900" fill="#f4f4f3" stroke="#c6c4c1" stroke-width="0.900"/><circle cx="19.300" cy="11.500" r="1.900" fill="#f4f4f3" stroke="#c6c4c1" stroke-width="0.900"/></svg>
<span class="t" style="left:493.40px;top:167.85px;font-size:11.52px;line-height:11.52px;color:#a9a6a3;-webkit-text-stroke:0.1px #a9a6a3;letter-spacing:0.330px;text-shadow:1px 1px 0 #fff;">Back</span>
<svg style="left:533px;top:168px;" width="12" height="10" viewBox="0 0 12 10"><path d="M1.500 2.300 l4.600 4.600 l4.600 -4.600" fill="none" stroke="#a3a09d" stroke-width="1.500"/></svg>
<svg style="left:559px;top:161px;" width="24" height="24" viewBox="0 0 24 24"><path d="M12.500 4.400 L20.200 11.400 L12.500 18.400" fill="none" stroke="#cbc9c6" stroke-width="4.600" stroke-linecap="round" stroke-linejoin="round"/><path d="M12.500 4.400 L20.200 11.400 L12.500 18.400" fill="none" stroke="#f7f7f6" stroke-width="2.800" stroke-linecap="round" stroke-linejoin="round"/>
<circle cx="4" cy="11.500" r="1.900" fill="#f4f4f3" stroke="#c6c4c1" stroke-width="0.900"/><circle cx="10.400" cy="11.500" r="1.900" fill="#f4f4f3" stroke="#c6c4c1" stroke-width="0.900"/></svg>
<span class="t" style="left:587.00px;top:167.85px;font-size:11.52px;line-height:11.52px;color:#a9a6a3;-webkit-text-stroke:0.1px #a9a6a3;letter-spacing:0.209px;text-shadow:1px 1px 0 #fff;">Forward</span>
<svg style="left:644px;top:168px;" width="12" height="10" viewBox="0 0 12 10"><path d="M1.500 2.300 l4.600 4.600 l4.600 -4.600" fill="none" stroke="#a3a09d" stroke-width="1.500"/></svg>
<svg style="left:669px;top:160px;" width="24" height="26" viewBox="0 0 24 26"><path d="M5.400 12.300 L12.500 4.600 L19.600 12.300" fill="none" stroke="#8f8d8a" stroke-width="4.600" stroke-linecap="round" stroke-linejoin="round"/><path d="M5.400 12.300 L12.500 4.600 L19.600 12.300" fill="none" stroke="#f8f8f7" stroke-width="2.800" stroke-linecap="round" stroke-linejoin="round"/>
<circle cx="12.400" cy="14.800" r="1.700" fill="#f8f8f7" stroke="#8f8d8a" stroke-width="0.900"/><circle cx="12.400" cy="20.700" r="2.100" fill="#f8f8f7" stroke="#8f8d8a" stroke-width="0.900"/></svg>
<svg style="left:706px;top:161px;" width="24" height="24" viewBox="0 0 24 24"><path d="M8.200 2.400 h7.600 l5.800 5.800 v7.600 l-5.800 5.800 h-7.600 l-5.800 -5.800 v-7.600z" fill="#f6f6f5" stroke="#dddcda" stroke-width="1"/><path d="M9 4.600 h6 l4.400 4.400 v6 l-4.400 4.400 h-6 l-4.400 -4.400 v-6z" fill="#c5c0be"/></svg>
<svg style="left:742px;top:161px;" width="24" height="24" viewBox="0 0 24 24"><path d="M19.800 12.500 A7.600 7.600 0 1 1 14.800 5.200" fill="none" stroke="#8f8d8a" stroke-width="4.600"/><path d="M13 1.800 L21.600 2.600 L19 11Z" fill="#f8f8f7" stroke="#8f8d8a" stroke-width="1" stroke-linejoin="round"/><path d="M19.800 12.500 A7.600 7.600 0 1 1 14.800 5.200" fill="none" stroke="#f8f8f7" stroke-width="2.800"/><path d="M14.500 3.500 L20 4 L18.400 9Z" fill="#f8f8f7"/></svg>
<div style="left:777px;top:162px;width:1px;height:22px;background:#c9c7c4;"></div>
<div style="left:778px;top:162px;width:1px;height:22px;background:#fbfbfa;"></div>
<div style="left:861px;top:162px;width:1px;height:22px;background:#c9c7c4;"></div>
<div style="left:862px;top:162px;width:1px;height:22px;background:#fbfbfa;"></div>
<svg style="left:791.7px;top:163.3px;" width="20.8" height="18" viewBox="0 0 22 20" preserveAspectRatio="none"><defs><linearGradient id="fs" x1="0" y1="0" x2="0" y2="1"><stop offset="0" stop-color="#a3c1e9"/><stop offset="1" stop-color="#6f99d2"/></linearGradient></defs>
<path d="M1 3 q0 -1.500 1.500 -1.500 h6 q1 0 1.500 1 l1 1.500 h9 q1 0 1 1 v13 q0 1 -1 1 h-18 q-1 0 -1 -1z" fill="url(#fs)" stroke="#2c5daa" stroke-width="1.200"/>
<path d="M1.800 6 h7.200 l1.200 -1.200" fill="none" stroke="#c3d7f2" stroke-width="0.800"/>
<path d="M5 12.300 l6 -4.800 l6 4.800 M6.800 11.500 v5 h3 v-3 h2.400 v3 h3 v-5" fill="none" stroke="#2a5aa6" stroke-width="1.400"/></svg>
<svg style="left:826px;top:160px;" width="24" height="26" viewBox="0 0 24 26"><rect x="2.700" y="2.500" width="19" height="12.200" rx="1.300" fill="#f2f2ef" stroke="#5c5c58" stroke-width="1.100"/><rect x="4.700" y="4.400" width="15" height="8.300" fill="#2f5fae" stroke="#1f4488" stroke-width="0.600"/><path d="M11.500 4.400 h3.500 l-3 8.300 h-3.500z" fill="#fff" opacity="0.250"/>
<path d="M10.200 15.200 h4 l0.800 2 h-5.600z" fill="#d4d5d1" stroke="#777" stroke-width="0.500"/><rect x="7.500" y="17.200" width="9.400" height="1.600" rx="0.500" fill="#ecece9" stroke="#6a6a66" stroke-width="0.600"/>
<path d="M4.200 20.300 h16 l1.800 3.600 h-19.600z" fill="#ecece9" stroke="#5c5c58" stroke-width="0.800"/><path d="M5 21.900 h14.500" stroke="#777" stroke-width="1" stroke-dasharray="1 0.700"/></svg>
<div style="left:878px;top:165px;width:16px;height:16px;background:linear-gradient(#fdfdfd,#e9e8e6);border:1px solid #a3a19d;border-radius:3px;"></div>
<svg style="left:878px;top:165px;" width="16" height="16" viewBox="0 0 16 16"><rect x="4.500" y="6.500" width="7" height="3" rx="0.800" fill="#f4f4f3" stroke="#8f8d89"/></svg>
<div style="left:950px;top:165px;width:16px;height:16px;background:linear-gradient(#fdfdfd,#e9e8e6);border:1px solid #a3a19d;border-radius:3px;"></div>
<svg style="left:950px;top:165px;" width="16" height="16" viewBox="0 0 16 16"><path d="M6.500 4.500 h3 v2 h2 v3 h-2 v2 h-3 v-2 h-2 v-3 h2z" fill="#f4f4f3" stroke="#8f8d89"/></svg>
<span class="t" style="left:906.00px;top:167.85px;font-size:11.52px;line-height:11.52px;color:#111;-webkit-text-stroke:0.1px #111;letter-spacing:0.513px;">100%</span>
<div style="left:981px;top:160px;width:115px;height:26px;background:linear-gradient(#ffffff,#f1f0ef 60%,#e6e5e3);border:1px solid #8f8d89;border-radius:3.500px;box-shadow:inset 0 0 0 1px rgba(255,255,255,0.7);"></div>
<span class="t" style="left:987.00px;top:167.85px;font-size:11.52px;line-height:11.52px;color:#111;-webkit-text-stroke:0.1px #111;letter-spacing:0.446px;">Icon View</span>
<div style="left:1075px;top:164px;width:1px;height:18px;background:#c5c3c0;"></div>
<svg style="left:1078px;top:164px;" width="12" height="18" viewBox="0 0 12 18"><path d="M3 7.300 l3 -3 l3 3 M3 10.700 l3 3 l3 -3" fill="none" stroke="#222" stroke-width="1.400"/></svg>
<svg style="left:1106px;top:160px;" width="26" height="26" viewBox="0 0 26 26"><defs><radialGradient id="gl" cx="0.600" cy="0.300" r="0.700"><stop offset="0" stop-color="#ffffff"/><stop offset="0.400" stop-color="#ededec"/><stop offset="1" stop-color="#e2e2e0"/></radialGradient></defs>
<ellipse cx="13" cy="20.500" rx="9" ry="1.500" fill="#000" opacity="0.080"/>
<path d="M17 16.500 L22.300 22" stroke="#1c1c1c" stroke-width="4.200" stroke-linecap="round"/><path d="M18.500 15.800 L23.500 21" stroke="#6a7078" stroke-width="1" opacity="0.800"/>
<circle cx="11.100" cy="10.750" r="7.600" fill="url(#gl)" stroke="#20409c" stroke-width="3"/><circle cx="11.100" cy="10.750" r="7.300" fill="none" stroke="#5c60d4" stroke-width="1.500"/><circle cx="11.100" cy="10.750" r="8.800" fill="none" stroke="#1a3a90" stroke-width="0.700"/></svg>
<span class="t" style="left:467.00px;top:207.85px;font-size:11.52px;line-height:11.52px;color:#111;-webkit-text-stroke:0.1px #111;letter-spacing:0.285px;">Places</span>
<svg style="left:552px;top:208px;" width="14" height="10" viewBox="0 0 14 10"><path d="M2 2.500 l5 5 l5 -5" fill="none" stroke="#1a1a1a" stroke-width="1.800"/></svg>
<svg style="left:581px;top:207px;" width="12" height="12" viewBox="0 0 12 12"><path d="M2 2 l8 8 M10 2 l-8 8" stroke="#8a8885" stroke-width="2.600" stroke-linecap="round"/><path d="M2 2 l8 8 M10 2 l-8 8" stroke="#c9c7c4" stroke-width="0.800" stroke-linecap="round"/></svg>
<div style="left:616px;top:198px;width:30px;height:30px;background:linear-gradient(#ffffff,#f3f2f1 55%,#e7e6e4);border:1px solid #98968f;border-radius:3.500px;box-shadow:inset 0 0 0 1px rgba(255,255,255,0.7);"></div>
<svg style="left:621px;top:202px;" width="20" height="22" viewBox="0 0 20 22"><path d="M2.500 1.800 h12.500 l2.500 2.500 v15.200 h-15z" fill="#fbfbfa" stroke="#aeaeab"/><path d="M5 6 h8 M5 8.500 h8 M5 11 h6 M5 13.500 h4" stroke="#cfcfcc" stroke-width="1"/>
<path d="M16.500 2 l2.500 2.500 l-9 10 l-3.500 1.500 l1 -3.500z" fill="#f5a623" stroke="#a86a00" stroke-width="0.700"/><path d="M16.500 2 l2.500 2.500 l-1.500 1.700 l-2.500 -2.500z" fill="#d8231f"/></svg>
<div style="left:660px;top:198px;width:21px;height:30px;background:linear-gradient(#ffffff,#f3f2f1 55%,#e7e6e4);border:1px solid #98968f;border-radius:3.500px;box-shadow:inset 0 0 0 1px rgba(255,255,255,0.7);"></div>
<svg style="left:665px;top:207px;" width="10" height="12" viewBox="0 0 10 12"><path d="M7 2.500 l-3.500 3.500 l3.500 3.500" fill="none" stroke="#222" stroke-width="1.500"/></svg>
<div style="left:686px;top:198px;width:63px;height:30px;background:linear-gradient(#bdbbb8,#c9c7c4 30%,#cdcbc8);border:1px solid #8b8985;border-radius:3.500px;box-shadow:inset 0 1px 2px rgba(0,0,0,0.18);"></div>
<svg style="left:692px;top:205px;" width="17" height="16" viewBox="0 0 17 16"><path d="M1 2.500 q0 -1 1 -1 h4.500 q1 0 1.300 0.800 l0.700 1.200 h7 q1 0 1 1 v9.500 q0 1 -1 1 h-13.500 q-1 0 -1 -1z" fill="#8fb2e3" stroke="#3465a4"/>
<path d="M4 9.500 l4.500 -3.500 l4.500 3.500 M5.500 9 v3.500 h2 v-2 h2 v2 h2 v-3.500" fill="none" stroke="#2a5aa2" stroke-width="1.100"/></svg>
<span class="t" style="left:710.50px;top:208.35px;font-size:11.52px;line-height:11.52px;color:#000;font-weight:bold;-webkit-text-stroke:0.35px #000;letter-spacing:1.261px;">koiva</span>
<div style="left:457px;top:233px;width:148px;height:448px;background:#fff;border:1px solid #9b9894;"></div>
<span class="t" style="left:474.50px;top:242.85px;font-size:11.52px;line-height:11.52px;color:#111;font-weight:bold;-webkit-text-stroke:0.35px #111;letter-spacing:0.908px;">Devices</span>
<span class="t" style="left:474.50px;top:336.85px;font-size:11.52px;line-height:11.52px;color:#111;font-weight:bold;-webkit-text-stroke:0.35px #111;letter-spacing:1.282px;">Bookmarks</span>
<span class="t" style="left:474.50px;top:386.85px;font-size:11.52px;line-height:11.52px;color:#111;font-weight:bold;-webkit-text-stroke:0.35px #111;letter-spacing:1.586px;">Computer</span>
<span class="t" style="left:474.50px;top:590.85px;font-size:11.52px;line-height:11.52px;color:#111;font-weight:bold;-webkit-text-stroke:0.35px #111;letter-spacing:1.675px;">Network</span>
<div style="left:458px;top:406px;width:146px;height:22px;background:linear-gradient(#80a7dc,#6c94cb);"></div>
<svg style="left:482.3px;top:265.2px;" width="14.6" height="14.6" viewBox="0 0 16 16"><rect x="1" y="1.500" width="14" height="13.500" rx="1.500" fill="#f6f6f4" stroke="#5a5c58"/><rect x="2.500" y="3" width="11" height="8" rx="1" fill="#e9e9e6" stroke="#b5b5b2" stroke-width="0.600"/><ellipse cx="8" cy="7" rx="3.800" ry="2.600" fill="#f4f4f2" stroke="#bdbdba" stroke-width="0.700"/><path d="M2 12.500 h12" stroke="#aaa"/></svg>
<span class="t" style="left:502.00px;top:267.85px;font-size:11.52px;line-height:11.52px;color:#1a1a1a;-webkit-text-stroke:0.1px #1a1a1a;letter-spacing:0.043px;">Disk E</span>
<svg style="left:482.3px;top:287.2px;" width="14.6" height="14.6" viewBox="0 0 16 16"><rect x="1" y="1.500" width="14" height="13.500" rx="1.500" fill="#f6f6f4" stroke="#5a5c58"/><rect x="2.500" y="3" width="11" height="8" rx="1" fill="#e9e9e6" stroke="#b5b5b2" stroke-width="0.600"/><ellipse cx="8" cy="7" rx="3.800" ry="2.600" fill="#f4f4f2" stroke="#bdbdba" stroke-width="0.700"/><path d="M2 12.500 h12" stroke="#aaa"/></svg>
<span class="t" style="left:502.00px;top:289.85px;font-size:11.52px;line-height:11.52px;color:#1a1a1a;-webkit-text-stroke:0.1px #1a1a1a;letter-spacing:0.216px;">Disk D</span>
<svg style="left:482.3px;top:309.2px;" width="14.6" height="14.6" viewBox="0 0 16 16"><rect x="1" y="1.500" width="14" height="13.500" rx="1.500" fill="#f6f6f4" stroke="#5a5c58"/><rect x="2.500" y="3" width="11" height="8" rx="1" fill="#e9e9e6" stroke="#b5b5b2" stroke-width="0.600"/><ellipse cx="8" cy="7" rx="3.800" ry="2.600" fill="#f4f4f2" stroke="#bdbdba" stroke-width="0.700"/><path d="M2 12.500 h12" stroke="#aaa"/></svg>
<span class="t" style="left:502.00px;top:311.85px;font-size:11.52px;line-height:11.52px;color:#1a1a1a;-webkit-text-stroke:0.1px #1a1a1a;letter-spacing:0.116px;">Disk C</span>
<svg style="left:482px;top:357.7px;" width="16.2" height="16.6" viewBox="0 0 17 16" preserveAspectRatio="none"><path d="M1 3 q0 -1.200 1.200 -1.200 h4.300 q0.900 0 1.300 0.800 l0.700 1.300 h6.800 q1.200 0 1.200 1.200 v8.700 q0 1.200 -1.200 1.200 h-13.100 q-1.200 0 -1.200 -1.200z" fill="#8db0e2" stroke="#2f5fa3" stroke-width="1.100"/><path d="M1.500 5.600 h5.500 l1 -1" fill="none" stroke="#c3d7f2" stroke-width="0.800"/></svg>
<span class="t" style="left:502.00px;top:361.85px;font-size:11.52px;line-height:11.52px;color:#1a1a1a;-webkit-text-stroke:0.1px #1a1a1a;letter-spacing:0.527px;">icons</span>
<svg style="left:482px;top:407.7px;" width="16.2" height="16.6" viewBox="0 0 17 16" preserveAspectRatio="none"><path d="M1 3 q0 -1.200 1.200 -1.200 h4.300 q0.900 0 1.300 0.800 l0.700 1.300 h6.800 q1.200 0 1.200 1.200 v8.700 q0 1.200 -1.200 1.200 h-13.100 q-1.200 0 -1.200 -1.200z" fill="#8db0e2" stroke="#2f5fa3" stroke-width="1.100"/><path d="M1.500 5.600 h5.500 l1 -1" fill="none" stroke="#c3d7f2" stroke-width="0.800"/><path d="M3.300 10.800 l5.200 -4.200 l5.200 4.200 M5 10.300 v3.700 h2.500 v-2.400 h2 v2.400 h2.500 v-3.700" fill="none" stroke="#2a5aa2" stroke-width="1.200"/></svg>
<span class="t" style="left:502.00px;top:411.85px;font-size:11.52px;line-height:11.52px;color:#fff;-webkit-text-stroke:0.1px #fff;letter-spacing:0.527px;">koiva</span>
<svg style="left:482px;top:429.7px;" width="16.2" height="16.6" viewBox="0 0 17 16" preserveAspectRatio="none"><path d="M1 3 q0 -1.200 1.200 -1.200 h4.300 q0.900 0 1.300 0.800 l0.700 1.300 h6.800 q1.200 0 1.200 1.200 v8.700 q0 1.200 -1.200 1.200 h-13.100 q-1.200 0 -1.200 -1.200z" fill="#8db0e2" stroke="#2f5fa3" stroke-width="1.100"/><path d="M1.500 5.600 h5.500 l1 -1" fill="none" stroke="#c3d7f2" stroke-width="0.800"/><path d="M4.500 8 v-1.500 h1.500 M11 6.500 h1.500 v1.500 M12.500 12 v1.500 h-1.500 M6 13.500 h-1.500 v-1.500" fill="none" stroke="#2a5aa2" stroke-width="1"/><rect x="7" y="8" width="3" height="4" fill="none" stroke="#2a5aa2"/></svg>
<span class="t" style="left:502.00px;top:433.85px;font-size:11.52px;line-height:11.52px;color:#1a1a1a;-webkit-text-stroke:0.1px #1a1a1a;letter-spacing:0.624px;">Desktop</span>
<svg style="left:482.3px;top:453.2px;" width="14.6" height="14.6" viewBox="0 0 16 16"><rect x="1" y="1.500" width="14" height="13.500" rx="1.500" fill="#f6f6f4" stroke="#5a5c58"/><rect x="2.500" y="3" width="11" height="8" rx="1" fill="#e9e9e6" stroke="#b5b5b2" stroke-width="0.600"/><ellipse cx="8" cy="7" rx="3.800" ry="2.600" fill="#f4f4f2" stroke="#bdbdba" stroke-width="0.700"/><path d="M2 12.500 h12" stroke="#aaa"/></svg>
<span class="t" style="left:502.00px;top:455.85px;font-size:11.52px;line-height:11.52px;color:#1a1a1a;-webkit-text-stroke:0.1px #1a1a1a;letter-spacing:0.533px;">File System</span>
<svg style="left:482px;top:473.7px;" width="16.2" height="16.6" viewBox="0 0 17 16" preserveAspectRatio="none"><path d="M1 3 q0 -1.200 1.200 -1.200 h4.300 q0.900 0 1.300 0.800 l0.700 1.300 h6.800 q1.200 0 1.200 1.200 v8.700 q0 1.200 -1.200 1.200 h-13.100 q-1.200 0 -1.200 -1.200z" fill="#8db0e2" stroke="#2f5fa3" stroke-width="1.100"/><path d="M1.500 5.600 h5.500 l1 -1" fill="none" stroke="#c3d7f2" stroke-width="0.800"/><path d="M5 7.300 h3.800 l2 2 v4.700 h-5.800z" fill="none" stroke="#2a5aa2" stroke-width="1.300"/><path d="M8.300 7.500 v2.300 h2.300" fill="none" stroke="#2a5aa2" stroke-width="0.900"/><path d="M8 5.800 h3.200 l1.800 1.800 v5.400" fill="none" stroke="#2a5aa2" stroke-width="1"/></svg>
<span class="t" style="left:502.00px;top:477.85px;font-size:11.52px;line-height:11.52px;color:#1a1a1a;-webkit-text-stroke:0.1px #1a1a1a;letter-spacing:0.905px;">Documents</span>
<svg style="left:482px;top:495.7px;" width="16.2" height="16.6" viewBox="0 0 17 16" preserveAspectRatio="none"><path d="M1 3 q0 -1.200 1.200 -1.200 h4.300 q0.900 0 1.300 0.800 l0.700 1.300 h6.800 q1.200 0 1.200 1.200 v8.700 q0 1.200 -1.200 1.200 h-13.100 q-1.200 0 -1.200 -1.200z" fill="#8db0e2" stroke="#2f5fa3" stroke-width="1.100"/><path d="M1.500 5.600 h5.500 l1 -1" fill="none" stroke="#c3d7f2" stroke-width="0.800"/><path d="M8.500 6.300 v1.300 M8.500 8.600 v1.300" stroke="#2a5aa2" stroke-width="1.400"/><path d="M5.300 10 l3.200 3.400 l3.200 -3.400" fill="none" stroke="#2a5aa2" stroke-width="1.400"/></svg>
<span class="t" style="left:502.00px;top:499.85px;font-size:11.52px;line-height:11.52px;color:#1a1a1a;-webkit-text-stroke:0.1px #1a1a1a;letter-spacing:0.689px;">Downloads</span>
<svg style="left:482px;top:517.7px;" width="16.2" height="16.6" viewBox="0 0 17 16" preserveAspectRatio="none"><path d="M1 3 q0 -1.200 1.200 -1.200 h4.300 q0.900 0 1.300 0.800 l0.700 1.300 h6.800 q1.200 0 1.200 1.200 v8.700 q0 1.200 -1.200 1.200 h-13.100 q-1.200 0 -1.200 -1.200z" fill="#8db0e2" stroke="#2f5fa3" stroke-width="1.100"/><path d="M1.500 5.600 h5.500 l1 -1" fill="none" stroke="#c3d7f2" stroke-width="0.800"/><path d="M7.700 11.800 v-5 h4.600 v5" fill="none" stroke="#2a5aa2" stroke-width="1.300"/><circle cx="6.200" cy="12.200" r="1.600" fill="none" stroke="#2a5aa2" stroke-width="1.200"/><circle cx="10.800" cy="12.200" r="1.600" fill="none" stroke="#2a5aa2" stroke-width="1.200"/></svg>
<span class="t" style="left:502.00px;top:521.85px;font-size:11.52px;line-height:11.52px;color:#1a1a1a;-webkit-text-stroke:0.1px #1a1a1a;letter-spacing:0.105px;">Music</span>
<svg style="left:482px;top:539.7px;" width="16.2" height="16.6" viewBox="0 0 17 16" preserveAspectRatio="none"><path d="M1 3 q0 -1.200 1.200 -1.200 h4.300 q0.900 0 1.300 0.800 l0.700 1.300 h6.800 q1.200 0 1.200 1.200 v8.700 q0 1.200 -1.200 1.200 h-13.100 q-1.200 0 -1.200 -1.200z" fill="#8db0e2" stroke="#2f5fa3" stroke-width="1.100"/><path d="M1.500 5.600 h5.500 l1 -1" fill="none" stroke="#c3d7f2" stroke-width="0.800"/><rect x="4.500" y="8" width="8" height="5.500" rx="1" fill="none" stroke="#2a5aa2" stroke-width="1.100"/><circle cx="8.500" cy="10.700" r="1.500" fill="none" stroke="#2a5aa2" stroke-width="0.900"/><path d="M6.500 8 l0.800 -1.200 h2.400 l0.800 1.200" fill="none" stroke="#2a5aa2" stroke-width="0.900"/></svg>
<span class="t" style="left:502.00px;top:543.85px;font-size:11.52px;line-height:11.52px;color:#1a1a1a;-webkit-text-stroke:0.1px #1a1a1a;letter-spacing:0.341px;">Pictures</span>
<svg style="left:481.8px;top:561.4px;" width="16" height="17" viewBox="0 0 16 17"><path d="M1.200 3.500 l1.300 11 q5.500 2.500 11 0 l1.300 -11z" fill="#e6e7e4" stroke="#3f413d" stroke-width="1"/><path d="M3.500 6 l0.700 8 M5.800 6.500 l0.400 8.500 M8 6.800 v8.500 M10.200 6.500 l-0.400 8.500 M12.500 6 l-0.700 8 M2.500 8.500 h11 M2.800 11 h10.400 M3 13.500 h10" stroke="#8a8c88" stroke-width="0.700"/><ellipse cx="8" cy="3.500" rx="6.800" ry="2.300" fill="#eeeeec" stroke="#3f413d" stroke-width="1"/><ellipse cx="8" cy="3.700" rx="4.800" ry="1.200" fill="#8a8c88"/></svg>
<span class="t" style="left:502.00px;top:565.85px;font-size:11.52px;line-height:11.52px;color:#1a1a1a;-webkit-text-stroke:0.1px #1a1a1a;letter-spacing:-0.129px;">Trash</span>
<svg style="left:481px;top:613px;" width="18" height="17" viewBox="0 0 18 17"><rect x="1" y="1" width="10" height="8" fill="#e4e5e1" stroke="#444" stroke-width="0.900"/><rect x="2.500" y="2.500" width="7" height="5" fill="#3f6cae"/><path d="M1 11 h10" stroke="#444"/><rect x="6" y="5.500" width="11" height="8" fill="#e4e5e1" stroke="#444" stroke-width="0.900"/><rect x="7.500" y="7" width="8" height="5" fill="#3f6cae"/><path d="M5.500 15.500 h12" stroke="#444" stroke-width="1.400"/></svg>
<span class="t" style="left:502.00px;top:615.85px;font-size:11.52px;line-height:11.52px;color:#1a1a1a;-webkit-text-stroke:0.1px #1a1a1a;letter-spacing:0.549px;">Browse Network</span>
<svg style="left:606px;top:414px;" width="5" height="50" viewBox="0 0 5 50"><path d="M1.500 0 v50 M3.500 1 v50" stroke="#b9b7b4" stroke-width="1" stroke-dasharray="1 1"/></svg>
<div style="left:611px;top:233px;width:646px;height:430px;background:#fff;border:1px solid #9b9894;"></div>
<svg width="0" height="0" style="left:0;top:0"><defs><linearGradient id="fg" x1="0" y1="0" x2="0" y2="1"><stop offset="0" stop-color="#a3c1ea"/><stop offset="0.300" stop-color="#8fb3e3"/><stop offset="1" stop-color="#729dd6"/></linearGradient><linearGradient id="fgb" x1="0" y1="0" x2="0" y2="0.300"><stop offset="0" stop-color="#9fbde8"/><stop offset="1" stop-color="#6591d0"/></linearGradient></defs></svg>
<svg style="left:673px;top:247px;" width="43" height="38" viewBox="0 0 43 38"><ellipse cx="21" cy="35.800" rx="22" ry="1.800" fill="#000" opacity="0.250"/>
<path d="M0.600 3.600 l3 -3 h13.600 l3 3.500 h19.700 q2 0 2 2 v27.300 q0 2 -2 2 h-37.300 q-2 0 -2 -2z" fill="url(#fgb)" stroke="#2d5ba4" stroke-width="1.200" stroke-linejoin="round"/>
<path d="M1.200 8.800 h15.300 l3.700 -4.100 h19.600 q1.500 0 1.500 1.500 v27 q0 1.600 -1.600 1.600 h-36.900 q-1.600 0 -1.600 -1.600z" fill="url(#fg)"/>
<path d="M1.700 9.400 h15.100 l3.700 -4.100 h19.300" fill="none" stroke="#bfd4f1" stroke-width="0.900" opacity="0.850"/>
<path d="M1.800 4 l2.300 -2.300 h12.600" fill="none" stroke="#c6d9f3" stroke-width="0.900" opacity="0.800"/></svg>
<span class="t" style="left:667.70px;top:292.85px;font-size:11.52px;line-height:11.52px;color:#111;-webkit-text-stroke:0.1px #111;letter-spacing:0.757px;">cdimages</span>
<svg style="left:828px;top:247px;" width="43" height="38" viewBox="0 0 43 38"><ellipse cx="21" cy="35.800" rx="22" ry="1.800" fill="#000" opacity="0.250"/>
<path d="M0.600 3.600 l3 -3 h13.600 l3 3.500 h19.700 q2 0 2 2 v27.300 q0 2 -2 2 h-37.300 q-2 0 -2 -2z" fill="url(#fgb)" stroke="#2d5ba4" stroke-width="1.200" stroke-linejoin="round"/>
<path d="M1.200 8.800 h15.300 l3.700 -4.100 h19.600 q1.500 0 1.500 1.500 v27 q0 1.600 -1.600 1.600 h-36.900 q-1.600 0 -1.600 -1.600z" fill="url(#fg)"/>
<path d="M1.700 9.400 h15.100 l3.700 -4.100 h19.300" fill="none" stroke="#bfd4f1" stroke-width="0.900" opacity="0.850"/>
<path d="M1.800 4 l2.300 -2.300 h12.600" fill="none" stroke="#c6d9f3" stroke-width="0.900" opacity="0.800"/><path d="M10.800 14.900 h3.400 l-3.400 3.400z M31.200 14.900 v3.400 l-3.400 -3.400z M31.200 30 h-3.400 l3.400 -3.400z M10.800 30 v-3.400 l3.400 3.400z" fill="#3f70bc"/><path d="M16.900 19 h4 l2.400 2.600 v5 h-6.400z" fill="none" stroke="#3f70bc" stroke-width="1.900" stroke-linejoin="round"/></svg>
<span class="t" style="left:826.50px;top:292.85px;font-size:11.52px;line-height:11.52px;color:#111;-webkit-text-stroke:0.1px #111;letter-spacing:0.624px;">Desktop</span>
<svg style="left:983px;top:247px;" width="43" height="38" viewBox="0 0 43 38"><ellipse cx="21" cy="35.800" rx="22" ry="1.800" fill="#000" opacity="0.250"/>
<path d="M0.600 3.600 l3 -3 h13.600 l3 3.500 h19.700 q2 0 2 2 v27.300 q0 2 -2 2 h-37.300 q-2 0 -2 -2z" fill="url(#fgb)" stroke="#2d5ba4" stroke-width="1.200" stroke-linejoin="round"/>
<path d="M1.200 8.800 h15.300 l3.700 -4.100 h19.600 q1.500 0 1.500 1.500 v27 q0 1.600 -1.600 1.600 h-36.900 q-1.600 0 -1.600 -1.600z" fill="url(#fg)"/>
<path d="M1.700 9.400 h15.100 l3.700 -4.100 h19.300" fill="none" stroke="#bfd4f1" stroke-width="0.900" opacity="0.850"/>
<path d="M1.800 4 l2.300 -2.300 h12.600" fill="none" stroke="#c6d9f3" stroke-width="0.900" opacity="0.800"/><path d="M14.100 16 h8 l4.100 4.300 v9.600 h-12.100z" fill="none" stroke="#3f70bc" stroke-width="1.800" stroke-linejoin="round"/><path d="M22 16 v4.500 h4.200z" fill="#3f70bc"/><path d="M19.100 12.500 h6.200 l5.200 5 v9.500" fill="none" stroke="#3f70bc" stroke-width="1.800"/></svg>
<span class="t" style="left:972.20px;top:292.85px;font-size:11.52px;line-height:11.52px;color:#111;-webkit-text-stroke:0.1px #111;letter-spacing:0.842px;">Documents</span>
<svg style="left:1138px;top:247px;" width="43" height="38" viewBox="0 0 43 38"><ellipse cx="21" cy="35.800" rx="22" ry="1.800" fill="#000" opacity="0.250"/>
<path d="M0.600 3.600 l3 -3 h13.600 l3 3.500 h19.700 q2 0 2 2 v27.300 q0 2 -2 2 h-37.300 q-2 0 -2 -2z" fill="url(#fgb)" stroke="#2d5ba4" stroke-width="1.200" stroke-linejoin="round"/>
<path d="M1.200 8.800 h15.300 l3.700 -4.100 h19.600 q1.500 0 1.500 1.500 v27 q0 1.600 -1.600 1.600 h-36.900 q-1.600 0 -1.600 -1.600z" fill="url(#fg)"/>
<path d="M1.700 9.400 h15.100 l3.700 -4.100 h19.300" fill="none" stroke="#bfd4f1" stroke-width="0.900" opacity="0.850"/>
<path d="M1.800 4 l2.300 -2.300 h12.600" fill="none" stroke="#c6d9f3" stroke-width="0.900" opacity="0.800"/><rect x="19.100" y="13.100" width="2.800" height="2.700" fill="#3f70bc"/><rect x="19.100" y="18.100" width="2.800" height="2.700" fill="#3f70bc"/><path d="M13.700 21 l6.800 7.300 l6.800 -7.300" fill="none" stroke="#3f70bc" stroke-width="2.600" stroke-linecap="round" stroke-linejoin="miter"/></svg>
<span class="t" style="left:1129.75px;top:292.85px;font-size:11.52px;line-height:11.52px;color:#111;-webkit-text-stroke:0.1px #111;letter-spacing:0.539px;">Downloads</span>
<svg style="left:673px;top:321px;" width="43" height="38" viewBox="0 0 43 38"><ellipse cx="21" cy="35.800" rx="22" ry="1.800" fill="#000" opacity="0.250"/>
<path d="M0.600 3.600 l3 -3 h13.600 l3 3.500 h19.700 q2 0 2 2 v27.300 q0 2 -2 2 h-37.300 q-2 0 -2 -2z" fill="url(#fgb)" stroke="#2d5ba4" stroke-width="1.200" stroke-linejoin="round"/>
<path d="M1.200 8.800 h15.300 l3.700 -4.100 h19.600 q1.500 0 1.500 1.500 v27 q0 1.600 -1.600 1.600 h-36.900 q-1.600 0 -1.600 -1.600z" fill="url(#fg)"/>
<path d="M1.700 9.400 h15.100 l3.700 -4.100 h19.300" fill="none" stroke="#bfd4f1" stroke-width="0.900" opacity="0.850"/>
<path d="M1.800 4 l2.300 -2.300 h12.600" fill="none" stroke="#c6d9f3" stroke-width="0.900" opacity="0.800"/></svg>
<span class="t" style="left:679.00px;top:366.85px;font-size:11.52px;line-height:11.52px;color:#111;-webkit-text-stroke:0.1px #111;letter-spacing:1.296px;">lmms</span>
<svg style="left:828px;top:321px;" width="43" height="38" viewBox="0 0 43 38"><ellipse cx="21" cy="35.800" rx="22" ry="1.800" fill="#000" opacity="0.250"/>
<path d="M0.600 3.600 l3 -3 h13.600 l3 3.500 h19.700 q2 0 2 2 v27.300 q0 2 -2 2 h-37.300 q-2 0 -2 -2z" fill="url(#fgb)" stroke="#2d5ba4" stroke-width="1.200" stroke-linejoin="round"/>
<path d="M1.200 8.800 h15.300 l3.700 -4.100 h19.600 q1.500 0 1.500 1.500 v27 q0 1.600 -1.600 1.600 h-36.900 q-1.600 0 -1.600 -1.600z" fill="url(#fg)"/>
<path d="M1.700 9.400 h15.100 l3.700 -4.100 h19.300" fill="none" stroke="#bfd4f1" stroke-width="0.900" opacity="0.850"/>
<path d="M1.800 4 l2.300 -2.300 h12.600" fill="none" stroke="#c6d9f3" stroke-width="0.900" opacity="0.800"/></svg>
<span class="t" style="left:839.00px;top:366.85px;font-size:11.52px;line-height:11.52px;color:#111;-webkit-text-stroke:0.1px #111;letter-spacing:0.093px;">Mail</span>
<svg style="left:983px;top:321px;" width="43" height="38" viewBox="0 0 43 38"><ellipse cx="21" cy="35.800" rx="22" ry="1.800" fill="#000" opacity="0.250"/>
<path d="M0.600 3.600 l3 -3 h13.600 l3 3.500 h19.700 q2 0 2 2 v27.300 q0 2 -2 2 h-37.300 q-2 0 -2 -2z" fill="url(#fgb)" stroke="#2d5ba4" stroke-width="1.200" stroke-linejoin="round"/>
<path d="M1.200 8.800 h15.300 l3.700 -4.100 h19.600 q1.500 0 1.500 1.500 v27 q0 1.600 -1.600 1.600 h-36.900 q-1.600 0 -1.600 -1.600z" fill="url(#fg)"/>
<path d="M1.700 9.400 h15.100 l3.700 -4.100 h19.300" fill="none" stroke="#bfd4f1" stroke-width="0.900" opacity="0.850"/>
<path d="M1.800 4 l2.300 -2.300 h12.600" fill="none" stroke="#c6d9f3" stroke-width="0.900" opacity="0.800"/></svg>
<span class="t" style="left:985.70px;top:366.85px;font-size:11.52px;line-height:11.52px;color:#111;-webkit-text-stroke:0.1px #111;letter-spacing:0.622px;">Movies</span>
<svg style="left:1138px;top:321px;" width="43" height="38" viewBox="0 0 43 38"><ellipse cx="21" cy="35.800" rx="22" ry="1.800" fill="#000" opacity="0.250"/>
<path d="M0.600 3.600 l3 -3 h13.600 l3 3.500 h19.700 q2 0 2 2 v27.300 q0 2 -2 2 h-37.300 q-2 0 -2 -2z" fill="url(#fgb)" stroke="#2d5ba4" stroke-width="1.200" stroke-linejoin="round"/>
<path d="M1.200 8.800 h15.300 l3.700 -4.100 h19.600 q1.500 0 1.500 1.500 v27 q0 1.600 -1.600 1.600 h-36.900 q-1.600 0 -1.600 -1.600z" fill="url(#fg)"/>
<path d="M1.700 9.400 h15.100 l3.700 -4.100 h19.300" fill="none" stroke="#bfd4f1" stroke-width="0.900" opacity="0.850"/>
<path d="M1.800 4 l2.300 -2.300 h12.600" fill="none" stroke="#c6d9f3" stroke-width="0.900" opacity="0.800"/><path d="M19.600 24 v-11 h10.200 v11" fill="none" stroke="#3f70bc" stroke-width="1.900" stroke-linejoin="miter"/><circle cx="15.500" cy="25.300" r="3.700" fill="none" stroke="#3f70bc" stroke-width="1.700"/><circle cx="26.500" cy="25.300" r="3.700" fill="none" stroke="#3f70bc" stroke-width="1.700"/></svg>
<span class="t" style="left:1144.70px;top:366.85px;font-size:11.52px;line-height:11.52px;color:#111;-webkit-text-stroke:0.1px #111;letter-spacing:-0.020px;">Music</span>
<svg style="left:673px;top:395px;" width="43" height="38" viewBox="0 0 43 38"><ellipse cx="21" cy="35.800" rx="22" ry="1.800" fill="#000" opacity="0.250"/>
<path d="M0.600 3.600 l3 -3 h13.600 l3 3.500 h19.700 q2 0 2 2 v27.300 q0 2 -2 2 h-37.300 q-2 0 -2 -2z" fill="url(#fgb)" stroke="#2d5ba4" stroke-width="1.200" stroke-linejoin="round"/>
<path d="M1.200 8.800 h15.300 l3.700 -4.100 h19.600 q1.500 0 1.500 1.500 v27 q0 1.600 -1.600 1.600 h-36.900 q-1.600 0 -1.600 -1.600z" fill="url(#fg)"/>
<path d="M1.700 9.400 h15.100 l3.700 -4.100 h19.300" fill="none" stroke="#bfd4f1" stroke-width="0.900" opacity="0.850"/>
<path d="M1.800 4 l2.300 -2.300 h12.600" fill="none" stroke="#c6d9f3" stroke-width="0.900" opacity="0.800"/><path d="M15 14.800 q0.800 -1.500 2.500 -1.500 h7 q1.700 0 2.500 1.500 h2.500 q2.700 0 2.700 2.700 v10 q0 2.700 -2.700 2.700 h-1.500 M13.500 30.200 h-1.500 q-2.700 0 -2.700 -2.700 v-10 q0 -2.700 2.700 -2.700 h3" fill="none" stroke="#3f70bc" stroke-width="1.700"/><circle cx="20.900" cy="23.600" r="6.300" fill="none" stroke="#3f70bc" stroke-width="1.600"/><circle cx="20.900" cy="23.600" r="3.400" fill="none" stroke="#3f70bc" stroke-width="1.300"/><circle cx="20.900" cy="23.600" r="1.300" fill="#3f70bc"/></svg>
<span class="t" style="left:673.00px;top:440.85px;font-size:11.52px;line-height:11.52px;color:#111;-webkit-text-stroke:0.1px #111;letter-spacing:0.341px;">Pictures</span>
<svg style="left:828px;top:395px;" width="43" height="38" viewBox="0 0 43 38"><ellipse cx="21" cy="35.800" rx="22" ry="1.800" fill="#000" opacity="0.250"/>
<path d="M0.600 3.600 l3 -3 h13.600 l3 3.500 h19.700 q2 0 2 2 v27.300 q0 2 -2 2 h-37.300 q-2 0 -2 -2z" fill="url(#fgb)" stroke="#2d5ba4" stroke-width="1.200" stroke-linejoin="round"/>
<path d="M1.200 8.800 h15.300 l3.700 -4.100 h19.600 q1.500 0 1.500 1.500 v27 q0 1.600 -1.600 1.600 h-36.900 q-1.600 0 -1.600 -1.600z" fill="url(#fg)"/>
<path d="M1.700 9.400 h15.100 l3.700 -4.100 h19.300" fill="none" stroke="#bfd4f1" stroke-width="0.900" opacity="0.850"/>
<path d="M1.800 4 l2.300 -2.300 h12.600" fill="none" stroke="#c6d9f3" stroke-width="0.900" opacity="0.800"/></svg>
<span class="t" style="left:839.00px;top:440.85px;font-size:11.52px;line-height:11.52px;color:#111;-webkit-text-stroke:0.1px #111;letter-spacing:0.899px;">tmp</span>
<span class="t" style="left:613.80px;top:666.85px;font-size:11.52px;line-height:11.52px;color:#111;-webkit-text-stroke:0.1px #111;letter-spacing:0.322px;">10 items, Free space: 4.8 GB</span>
<svg style="left:1244px;top:668px;" width="13" height="13" viewBox="0 0 13 13"><g fill="#8d8a86"><rect x="10" y="1" width="1" height="1"/><rect x="11" y="2" width="1" height="1" fill="#fff"/><rect x="10" y="4" width="1" height="1"/><rect x="11" y="5" width="1" height="1" fill="#fff"/><rect x="7" y="4" width="1" height="1"/><rect x="8" y="5" width="1" height="1" fill="#fff"/><rect x="10" y="7" width="1" height="1"/><rect x="11" y="8" width="1" height="1" fill="#fff"/><rect x="7" y="7" width="1" height="1"/><rect x="8" y="8" width="1" height="1" fill="#fff"/><rect x="4" y="7" width="1" height="1"/><rect x="5" y="8" width="1" height="1" fill="#fff"/><rect x="10" y="10" width="1" height="1"/><rect x="11" y="11" width="1" height="1" fill="#fff"/><rect x="7" y="10" width="1" height="1"/><rect x="8" y="11" width="1" height="1" fill="#fff"/><rect x="4" y="10" width="1" height="1"/><rect x="5" y="11" width="1" height="1" fill="#fff"/><rect x="1" y="10" width="1" height="1"/><rect x="2" y="11" width="1" height="1" fill="#fff"/></g></svg>
<div style="left:0px;top:695px;width:1280px;height:25px;background:rgba(40,45,52,0.68);"></div>
<svg style="left:30px;top:676px;" width="60" height="44" viewBox="0 0 60 44"><g fill="#1c4f7c" opacity="0.30"><rect x="8" y="10" width="5" height="34"/><rect x="15" y="2" width="7" height="42"/><rect x="24" y="14" width="6" height="30"/></g></svg>
<svg style="left:0px;top:695px;" width="24" height="25" viewBox="0 0 24 25"><path d="M7 3.200 A10.300 10.300 0 1 1 7 20.800" fill="none" stroke="#74893a" stroke-width="1.500"/><path d="M11.500 6.800 A5.600 5.600 0 1 1 11.500 17.200" fill="none" stroke="#879f44" stroke-width="1.600"/>
<path d="M1.800 6 L11.300 12 L1.800 17.500Z" fill="#8fb04c"/></svg>
<div style="left:24px;top:695px;width:24px;height:25px;background:linear-gradient(#fefefe,#f4f4f3 60%,#e9e9e8);border:1px solid #f6f6f5;border-radius:5.500px;box-shadow:inset 0 0 0 1px #8f8d8a;"></div>
<svg style="left:27.8px;top:698.8px;" width="16.4" height="15.6" viewBox="0 0 17 17" preserveAspectRatio="none"><path d="M0.800 3 q0 -1.500 1.500 -1.500 h4.500 q1 0 1.400 0.900 l0.800 1.400 h6 q1.500 0 1.500 1.500 v8.700 q0 1.500 -1.500 1.500 h-12.700 q-1.500 0 -1.500 -1.500z" fill="#86aadf" stroke="#3465a4"/>
<path d="M1.500 5.500 h5.500 l1 -1" fill="none" stroke="#b5cdee" stroke-width="0.800"/>
<path d="M4.500 9 v-1.500 h1.500 M10.500 7.500 h1.500 v1.500 M12 12.500 v1.500 h-1.500 M6 14 h-1.500 v-1.500" fill="none" stroke="#2f62ad" stroke-width="1"/><rect x="7" y="9" width="2.600" height="3.500" fill="none" stroke="#2f62ad"/></svg>
<svg style="left:51px;top:696px;" width="19" height="22" viewBox="0 0 19 22"><path d="M1 3 q0 -2 2 -2 h13 q2 0 2 2 v17 h-17z" fill="#dcdcd9" stroke="#9c9c98" stroke-width="0.900"/><path d="M1.500 3 q0 -1.500 1.500 -1.500 h13 q1.500 0 1.500 1.500" fill="none" stroke="#fff" stroke-width="1.200"/>
<rect x="3" y="4.500" width="13" height="6.800" fill="#f0f0ee" stroke="#8e8e8a" stroke-width="0.800"/><rect x="3" y="12.500" width="13" height="6.800" fill="#f0f0ee" stroke="#8e8e8a" stroke-width="0.800"/>
<rect x="6" y="6.300" width="7" height="2.200" fill="#c4c4c0" stroke="#8a8a86" stroke-width="0.500"/><rect x="6" y="14.300" width="7" height="2.200" fill="#c4c4c0" stroke="#8a8a86" stroke-width="0.500"/></svg>
<svg style="left:73px;top:698px;" width="22" height="18" viewBox="0 0 22 18"><rect x="0.600" y="0.600" width="20.800" height="16.300" rx="1" fill="#d4d4d1" stroke="#70706c" stroke-width="0.900"/><rect x="2.200" y="2.200" width="17.600" height="12.600" fill="#2b302e"/><path d="M11 2.200 h5.500 l-4 12.600 h-9z" fill="#fff" opacity="0.100"/><path d="M4.500 4.500 l1.800 1.200 l-1.800 1.200 M7 8.300 h2.500" stroke="#f2f2f2" stroke-width="0.900" fill="none"/></svg>
<svg style="left:97px;top:698px;" width="21" height="19" viewBox="0 0 21 19"><rect x="0.500" y="0.500" width="20" height="17.500" rx="1.800" fill="#f4f4f2" stroke="#d0d0cc" stroke-width="1"/>
<path d="M5.500 3 v11.500 M10.500 3 v11.500 M15.500 3 v11.500" stroke="#3a3a3a" stroke-width="1.700"/>
<rect x="3.500" y="3.500" width="4" height="3.500" fill="#fbfbfb" stroke="#4a4a4a" stroke-width="0.900"/><rect x="8.500" y="10" width="4" height="3.500" fill="#fbfbfb" stroke="#4a4a4a" stroke-width="0.900"/><rect x="13.500" y="6" width="4" height="3.500" fill="#fbfbfb" stroke="#4a4a4a" stroke-width="0.900"/></svg>
<svg style="left:120px;top:695px;" width="24" height="24" viewBox="0 0 24 24"><circle cx="11.900" cy="12" r="10" fill="#141e28" fill-opacity="0.550" stroke="#8f8f8d" stroke-width="2.600"/><circle cx="11.900" cy="12" r="11.200" fill="none" stroke="#5a5c5e" stroke-width="0.500"/>
<path d="M6 5.300 L7.800 5 L12.800 10.500 L11 12.300 L5.500 7Z" fill="#1f7af0"/><path d="M11.800 11.300 L17.800 17.500" stroke="#d9dadc" stroke-width="1.800" stroke-linecap="round"/>
<path d="M7.300 18.500 L15.500 8.800" stroke="#e4e5e6" stroke-width="2.400" stroke-linecap="round"/><path d="M14.200 8.200 a3 3 0 0 1 3.800 -3.300 l-1.800 2 l1.700 1.700 l2 -1.700 a3 3 0 0 1 -3.500 3.600z" fill="#e4e5e6"/></svg>
<svg style="left:144px;top:694px;" width="25" height="25" viewBox="0 0 25 25">
<path d="M1.300 5 L9.500 1.300 L17.500 4.500 L17.500 18.500 L9 22 L1.300 18.500Z" fill="#e6e7ea" stroke="#6a6a6a" stroke-width="0.700"/>
<path d="M1.300 5 L9.500 1.300 L17.500 4.500 L9 8Z" fill="#2a2a2a"/>
<path d="M1.300 5 L9 8 L9 22 L1.300 18.500Z" fill="#f4f4f5"/><path d="M1.300 5 L3.600 6 L3.600 19.500 L1.300 18.500Z" fill="#cf2a24"/><path d="M3.600 6 L9 8 L9 10.500 L3.600 8.500Z" fill="#cf2a24"/>
<path d="M9 8 L17.500 4.500 L17.500 18.500 L9 22Z" fill="#c8cbd2"/><path d="M9 8 L17.500 4.500 L17.500 8 L9 11.500Z" fill="#b8241f"/>
<path d="M1.300 14 L9 17 L9 22 L1.300 18.500Z" fill="#a9bfdc" opacity="0.800"/>
<circle cx="18" cy="14.400" r="5.600" fill="#e9a9c4" stroke="#b0708f" stroke-width="0.600"/><path d="M18 14.400 L22.500 11 A5.600 5.600 0 0 1 23.300 16Z" fill="#f6dbe6"/><circle cx="18" cy="14.400" r="1.500" fill="#f4f4f4" stroke="#b98aa0" stroke-width="0.400"/>
<rect x="9.700" y="15.800" width="8" height="8" rx="0.600" fill="#b9cbe4" stroke="#4a566a" stroke-width="0.700"/><rect x="11" y="16.200" width="5.400" height="3.400" fill="#eef2f8"/><rect x="11.800" y="21" width="3.800" height="2.600" fill="#5a6678"/>
</svg>
<svg style="left:169px;top:695px;" width="23" height="24" viewBox="0 0 23 24">
<rect x="3" y="1.500" width="18.500" height="17.500" fill="#fbfbfb" stroke="#2f5fae" stroke-width="1.200"/><rect x="3.600" y="2.100" width="17.300" height="3" fill="#b9bcc2"/><rect x="9" y="2.600" width="6" height="1.800" fill="#e4e5e8"/>
<rect x="18.300" y="7" width="1.800" height="9" fill="#8fb0e0"/>
<path d="M1 11.200 q0 -1.500 1.500 -1.500 h1.500 l0.800 -1.400 h3.600 l0.800 1.400 h5 q1.500 0 1.500 1.500 v9 q0 1.500 -1.500 1.500 h-11.700 q-1.500 0 -1.500 -1.500z" fill="#4a4d52" stroke="#1c1c1e" stroke-width="0.800"/>
<path d="M1.500 12 h14" stroke="#8a8d92" stroke-width="0.800"/>
<circle cx="9.800" cy="16.300" r="4.300" fill="#c4c9d2" stroke="#e8eaee" stroke-width="0.900"/><circle cx="9.800" cy="16.300" r="2.500" fill="#0c1830"/><circle cx="9" cy="15.500" r="0.800" fill="#6f9fe8"/>
<rect x="13.300" y="19.500" width="1.500" height="1.500" fill="#f0a020"/>
</svg>
<svg style="left:192px;top:694px;" width="25" height="25" viewBox="0 0 25 25"><defs><radialGradient id="ffg" cx="0.550" cy="0.350" r="0.650"><stop offset="0" stop-color="#6fc4f6"/><stop offset="0.500" stop-color="#2a7ad8"/><stop offset="1" stop-color="#12307a"/></radialGradient>
<radialGradient id="ffo" cx="0.500" cy="0.400" r="0.700"><stop offset="0" stop-color="#f59a1a"/><stop offset="0.700" stop-color="#e8601a"/><stop offset="1" stop-color="#c83c12"/></radialGradient></defs>
<circle cx="13.300" cy="10.800" r="9" fill="url(#ffg)"/>
<path d="M2.800 5 C3.500 4.500 4.500 5.500 5.200 6.500 C6 4.500 7.800 3.200 9.500 3 C8.500 4.200 8.500 5.500 9.200 6.500 C10.500 6.500 12 7 12.500 8.200 C11.500 9 10 9.200 9.500 10.500 C9.200 12 10 13.200 11.500 13.700 C13.500 14.200 15 13 16.200 13.500 C15.500 15.500 13.500 16.800 11.200 16.500 C13 18.500 17 18.500 19.500 16 C21.500 14 22 10.500 21 8 C22.800 9.500 23.800 12 23.500 14.500 C23 19.500 18.500 23.500 13 23.500 C6.500 23.500 1.300 18.500 1.300 12.200 C1.300 9.500 1.800 7 2.800 5Z" fill="url(#ffo)"/>
<path d="M21 8 C22.800 9.500 23.800 12 23.500 14.500 C23.200 17.500 21.500 20.200 19 21.800 C21.500 19 22.500 15.500 22 12 C21.800 10.500 21.500 9.200 21 8Z" fill="#f7c82a"/>
<path d="M2.800 5 C3.500 4.500 4.500 5.500 5.200 6.500 C6 4.500 7.800 3.200 9.500 3 C8.500 4.200 8.500 5.500 9.200 6.500 C7.500 7 6 8.500 5.500 10.500 C4.500 9 3.200 7 2.800 5Z" fill="#f08a1e"/>
</svg>
<svg style="left:217px;top:696px;" width="23" height="23" viewBox="0 0 23 23"><circle cx="11.200" cy="10.800" r="10.200" fill="#de3a2e"/>
<path d="M11.200 10.800 L2.370 5.700 A10.200 10.200 0 0 0 9.400 20.840 L13.800 13.300Z" fill="#3aa84a"/>
<path d="M11.200 10.800 L9.400 20.840 A10.200 10.200 0 0 0 21.200 8.800 L11.200 8.800Z" fill="#f7cd28"/>
<path d="M11.200 10.800 L21.200 8.800 A10.200 10.200 0 0 0 2.370 5.700 L7 9.500Z" fill="#de3a2e"/>
<circle cx="11.200" cy="10.800" r="5.100" fill="#f4f4f4"/><circle cx="11.200" cy="10.800" r="4.100" fill="#3f7fd8"/><path d="M7.500 9 A4.100 4.100 0 0 1 14.900 9Z" fill="#5c98e8" opacity="0.700"/>
</svg>
<svg style="left:243px;top:698px;" width="6" height="20" viewBox="0 0 6 20"><g fill="#ececea"><rect x="0" y="1" width="2" height="2"/><rect x="3" y="1" width="2" height="2"/><rect x="0" y="4" width="2" height="2"/><rect x="3" y="4" width="2" height="2"/><rect x="0" y="7" width="2" height="2"/><rect x="3" y="7" width="2" height="2"/><rect x="0" y="10" width="2" height="2"/><rect x="3" y="10" width="2" height="2"/><rect x="0" y="13" width="2" height="2"/><rect x="3" y="13" width="2" height="2"/><rect x="0" y="16" width="2" height="2"/><rect x="3" y="16" width="2" height="2"/></g></svg>
<svg style="left:258px;top:700px;" width="16" height="14" viewBox="0 0 16 14"><rect x="0.500" y="0.500" width="15" height="13" rx="1.500" fill="#f4f4f2" stroke="#cfcfcb" stroke-width="1"/>
<path d="M4 2.500 v9 M8 2.500 v9 M12 2.500 v9" stroke="#3a3a3a" stroke-width="1.300"/>
<rect x="2.600" y="3" width="2.800" height="2.800" fill="#fbfbfb" stroke="#3a3a3a" stroke-width="0.800"/><rect x="6.600" y="7.500" width="2.800" height="2.800" fill="#fbfbfb" stroke="#3a3a3a" stroke-width="0.800"/><rect x="10.600" y="4.500" width="2.800" height="2.800" fill="#fbfbfb" stroke="#3a3a3a" stroke-width="0.800"/></svg>
<span class="t" style="left:282.00px;top:701.85px;font-size:11.52px;line-height:11.52px;color:#070b10;-webkit-text-stroke:0.1px #070b10;letter-spacing:0.545px;">Control Center</span>
<div style="left:426px;top:695px;width:177px;height:25px;background:linear-gradient(#dddcda,#d4d2cf 50%,#cdcbc8);border:1px solid #f2f2f1;border-radius:5.500px;box-shadow:inset 0 0 0 1px #8f8d8a;"></div>
<svg style="left:434.8px;top:699.6px;" width="16.4" height="15.6" viewBox="0 0 18 18" preserveAspectRatio="none"><path d="M1 3 q0 -1.500 1.500 -1.500 h4.500 q1 0 1.400 0.900 l0.800 1.400 h7.300 q1.500 0 1.500 1.500 v9.200 q0 1.500 -1.500 1.500 h-14 q-1.500 0 -1.500 -1.500z" fill="#8fb2e3" stroke="#2f5fa8" stroke-width="1.200"/>
<path d="M1.800 6 h5.500 l1.200 -1.200" fill="none" stroke="#c3d7f2" stroke-width="0.800"/>
<path d="M3.500 11.200 l5.500 -4.400 l5.500 4.400 M5.300 10.600 v4 h2.500 v-2.500 h2.400 v2.500 h2.500 v-4" fill="none" stroke="#2a5aa6" stroke-width="1.300"/></svg>
<span class="t" style="left:459.70px;top:702.85px;font-size:11.52px;line-height:11.52px;color:#111;-webkit-text-stroke:0.1px #111;letter-spacing:0.452px;">koiva</span>
<div style="left:990px;top:696px;width:37px;height:23px;background:#9a9896;border-radius:3.500px;"></div>
<div style="left:1008px;top:696px;width:1px;height:23px;background:#1c2a38;"></div>
<div style="left:990px;top:707px;width:37px;height:1px;background:#1c2a38;"></div>
<div style="left:992px;top:697px;width:16px;height:10px;background:#c9dbf3;border:1px solid #5c86c8;border-top-color:#e8f0fb;"></div>
<div style="left:993px;top:698px;width:4px;height:6px;background:#7da2dc;"></div>
<svg style="left:1031px;top:698px;" width="6" height="20" viewBox="0 0 6 20"><g fill="#ececea"><rect x="0" y="1" width="2" height="2"/><rect x="3" y="1" width="2" height="2"/><rect x="0" y="4" width="2" height="2"/><rect x="3" y="4" width="2" height="2"/><rect x="0" y="7" width="2" height="2"/><rect x="3" y="7" width="2" height="2"/><rect x="0" y="10" width="2" height="2"/><rect x="3" y="10" width="2" height="2"/><rect x="0" y="13" width="2" height="2"/><rect x="3" y="13" width="2" height="2"/><rect x="0" y="16" width="2" height="2"/><rect x="3" y="16" width="2" height="2"/></g></svg>
<svg style="left:1038px;top:695px;" width="23" height="24" viewBox="0 0 23 24"><circle cx="11.500" cy="12" r="10.500" fill="#111" stroke="#9a9a98" stroke-width="1.200"/><path d="M4.500 12 l2.500 -2 l3.500 4 l7.500 -9 l2 2 l-9.500 12z" fill="#59c818" stroke="#2f7a08" stroke-width="0.600"/></svg>
<svg style="left:1062px;top:695px;" width="23" height="24" viewBox="0 0 23 24"><rect x="1.500" y="3.500" width="14" height="17" rx="1" fill="#c9a26a" stroke="#7a5a2a" stroke-width="0.900"/><rect x="6" y="1" width="5" height="4" rx="1" fill="#aaa" stroke="#666" stroke-width="0.700"/>
<rect x="9.500" y="9.500" width="11.500" height="13" fill="#f4f4f2" stroke="#999" stroke-width="0.800"/><path d="M11.500 13 h7 M11.500 15.500 h7 M11.500 18 h5" stroke="#bbb" stroke-width="0.900"/></svg>
<span class="t" style="left:1090.70px;top:699.91px;font-size:14.4px;line-height:14.4px;color:#05080c;-webkit-text-stroke:0.1px #05080c;letter-spacing:-0.515px;">en</span>
<svg style="left:1113px;top:696px;" width="24" height="22" viewBox="0 0 24 22"><path d="M1.500 8 h4 l6 -5.500 v17 l-6 -5.500 h-4z" fill="#cfcfcc" stroke="#8a8a88" stroke-width="0.800"/><path d="M8 4.500 v13" stroke="#fff" stroke-width="1" opacity="0.700"/>
<path d="M14 7.500 q2.500 3.500 0 7" fill="none" stroke="#5f88c4" stroke-width="1.300"/><path d="M16.500 5.500 q4 5.500 0 11" fill="none" stroke="#4a74b4" stroke-width="1.300"/><path d="M19 3.500 q5.500 7.500 0 15" fill="none" stroke="#3a64a4" stroke-width="1.300"/></svg>
<div style="left:1140px;top:696px;width:40px;height:23px;background:#000;border:2px solid #d9d5d1;box-shadow:inset 0 0 0 0.5px #777;"></div>
<svg style="left:1142px;top:698px;" width="36" height="19" viewBox="0 0 38 21"><path d="M0 21 V17 h1 v-1 h1 v2 h2 v-3 h1 v2 h1 v1 h2 v-2 h1 v1 h2 v1 h1 v-2 h1 v2 h2 v-1 h1 v1 h2 v-4 h1 v3 h1 v1 h2 v-2 h1 v2 h1 v-9 h1 v8 h1 v1 h2 v-3 h1 v3 h1 v-2 h1 v-13 h1 v10 h1 v-6 h1 v11z" fill="#1e8fe0"/></svg>
<div style="left:1182px;top:696px;width:40px;height:23px;background:#000;border:2px solid #d9d5d1;box-shadow:inset 0 0 0 0.5px #777;"></div>
<span class="t" style="left:1229.00px;top:701.85px;font-size:11.52px;line-height:11.52px;color:#06090e;-webkit-text-stroke:0.1px #06090e;letter-spacing:0.317px;">11:34:40</span>
</div></body></html>
